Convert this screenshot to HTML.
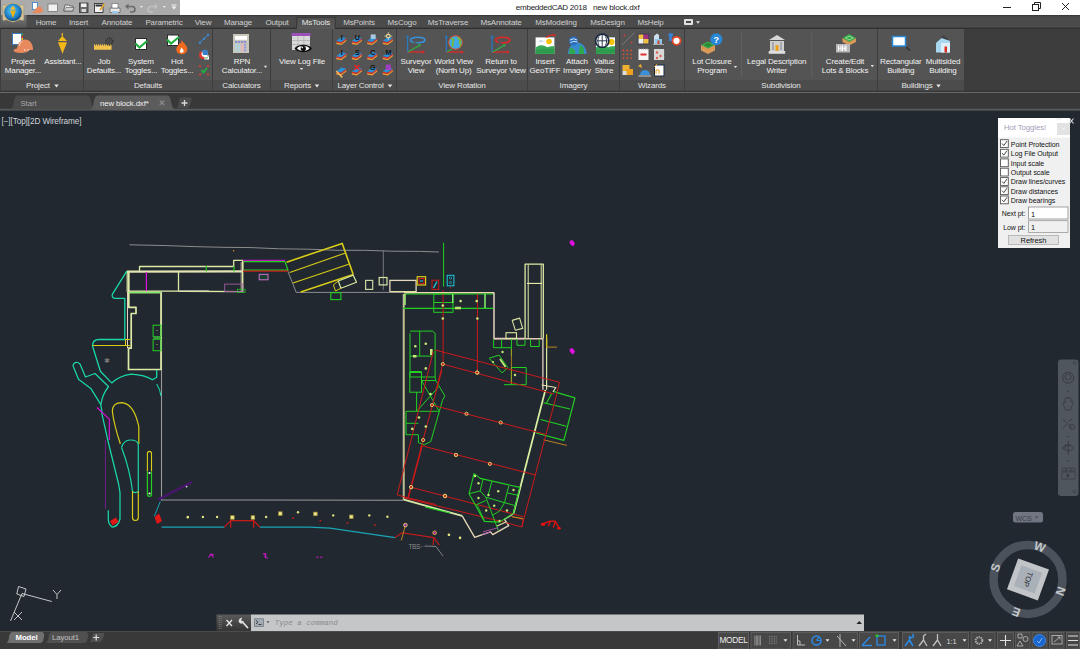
<!DOCTYPE html>
<html><head><meta charset="utf-8"><title>embeddedCAD</title>
<style>
*{margin:0;padding:0}
html,body{width:1080px;height:649px;overflow:hidden;background:#212830;font-family:"Liberation Sans",sans-serif}
svg{display:block;position:absolute;left:0;top:0}

</style></head><body>
<svg width="1080" height="649" viewBox="0 0 1080 649" shape-rendering="auto">
<rect x="0" y="110" width="1080" height="521" fill="#212830"/>
<path d="M129.4 244.8 L166.7 245.6 L196.7 246.7 L224.0 247.3 L251.7 247.6 L279.4 248.8 L308.5 249.2 L337.0 250.3 L364.3 250.3 L392.1 251.2 L420.6 251.4 L438.9 252.0" stroke="#8c8c8c" stroke-width="1" fill="none" stroke-linejoin="round" />
<path d="M383.3 250.5 L383.3 290.1" stroke="#8c8c8c" stroke-width="0.8" fill="none" stroke-linejoin="round" />
<path d="M287.1 269.4 L296.2 292.4 L389.0 292.4" stroke="#8c8c8c" stroke-width="1" fill="none" stroke-linejoin="round" />
<path d="M161.5 292.0 L161.5 499.9 L403.2 500.2 L403.2 294.0" stroke="#9a9a9a" stroke-width="1.1" fill="none" stroke-linejoin="round" />
<path d="M139.5 271.0 L139.5 266.5 L233.7 266.5 L233.7 260.3 L242.7 260.3 L242.7 271.0" stroke="#dfe9a6" stroke-width="1.3" fill="none" stroke-linejoin="round" />
<path d="M126.8 271.6 L243.0 271.4" stroke="#e2e4b4" stroke-width="2.2" fill="none" stroke-linejoin="round" />
<path d="M127.2 271.3 L127.2 292.0" stroke="#dfe9a6" stroke-width="1.2" fill="none" stroke-linejoin="round" />
<path d="M128.8 271.5 L128.8 307.3 L136.0 307.3 L136.0 313.5 L131.2 313.5 L131.2 348.2 L128.5 348.2 L128.5 369.5 L161.0 369.5 L161.0 292.5 L128.8 292.5" stroke="#dfe9a6" stroke-width="1.7" fill="none" stroke-linejoin="round" />
<path d="M127.5 292.0 L127.5 348.0" stroke="#e6d2c0" stroke-width="1" fill="none" stroke-linejoin="round" />
<path d="M129.0 292.5 L161.0 292.5" stroke="#7ee86a" stroke-width="1.6" fill="none" stroke-linejoin="round" />
<path d="M128.0 291.1 L178.5 291.1 L178.5 271.7" stroke="#dfe9a6" stroke-width="1.3" fill="none" stroke-linejoin="round" />
<path d="M178.5 291.3 L243.0 291.6" stroke="#dfe9a6" stroke-width="1.4" fill="none" stroke-linejoin="round" />
<path d="M180.0 290.6 L209.0 290.6" stroke="#a8a8a0" stroke-width="1" fill="none" stroke-linejoin="round" />
<path d="M242.7 260.3 L242.7 292.2" stroke="#dfe9a6" stroke-width="1.4" fill="none" stroke-linejoin="round" />
<path d="M241.2 262.0 L241.2 292.0" stroke="#e6d2c0" stroke-width="0.8" fill="none" stroke-linejoin="round" />
<path d="M146.4 272.0 L146.4 291.0" stroke="#e010e0" stroke-width="1.2" fill="none" stroke-linejoin="round" />
<path d="M206.3 266.0 L206.3 271.5" stroke="#22d022" stroke-width="1.2" fill="none" stroke-linejoin="round" /><path d="M234.0 266.0 L234.0 271.5" stroke="#22d022" stroke-width="1.2" fill="none" stroke-linejoin="round" />
<path d="M242.7 260.3 L285.4 260.3" stroke="#e010e0" stroke-width="1" fill="none" stroke-linejoin="round" />
<path d="M244.0 261.6 L285.0 261.6 L288.0 270.2 L244.0 270.2" stroke="#22d022" stroke-width="1.2" fill="none" stroke-linejoin="round" />
<path d="M243.0 271.1 L288.4 271.1" stroke="#cc1a1a" stroke-width="1.3" fill="none" stroke-linejoin="round" />
<rect x="224.7" y="284.1" width="18.30000000000001" height="7.5" stroke="#a060a0" stroke-width="0.9" fill="none"/>
<rect x="237.3" y="289.2" width="7.799999999999983" height="3.3000000000000114" stroke="#22d022" stroke-width="0.7" fill="none"/>
<rect x="259.2" y="274.3" width="8.800000000000011" height="5.5" stroke="#d070d0" stroke-width="1" fill="#1a4030"/>
<rect x="233" y="250" width="1.2" height="1.5" fill="#d08020"/>
<rect x="153.1" y="325.2" width="7.900000000000006" height="11.5" stroke="#22d022" stroke-width="1" fill="none"/><rect x="153.1" y="339.2" width="7.900000000000006" height="11.5" stroke="#22d022" stroke-width="1" fill="none"/>
<rect x="153.5" y="336.5" width="7" height="2.8" fill="#3a9a3a"/>
<path d="M126.8 271.2L112.3 294.3Q111.5 298.4 115.5 298.4L124.8 298.4L124.8 339.5L99 339.5Q92.5 339.5 92.5 346L100.3 371L102 373L111.7 382.9Q120 375.5 131.5 374.2Q145 375 152.4 379.8L156.7 377.3L156.7 370" stroke="#18d8a8" stroke-width="1.3" fill="none" stroke-linejoin="round" />
<path d="M80 364Q77 361 74 363.5Q72.5 365.5 73.5 367L78.5 379.2L90.8 388.4L100.7 404.4Q102 410 102 414.3L108.7 444L118.6 484L120 492.7L120 519Q118 527 112 527Q108.3 524 108.3 519L108.3 510.3" stroke="#18d8a8" stroke-width="1.25" fill="none" stroke-linejoin="round" />
<path d="M80 364L85.5 377L95 373.5L108.5 386.5Q102 395 101 404.4" stroke="#18d8a8" stroke-width="1.25" fill="none" stroke-linejoin="round" />
<path d="M156.7 384Q160 389 161 395.8" stroke="#18d8a8" stroke-width="1.1" fill="none" stroke-linejoin="round" />
<path d="M92.5 345.5 L130.0 345.5" stroke="#d8cc18" stroke-width="1.1" fill="none" stroke-linejoin="round" /><path d="M125.5 339.5 L125.5 345.5" stroke="#d8cc18" stroke-width="1" fill="none" stroke-linejoin="round" /><path d="M125.0 339.5 L130.0 339.5" stroke="#d8cc18" stroke-width="1" fill="none" stroke-linejoin="round" />
<text x="107" y="363.3" font-size="7" fill="#7a7a7a" text-anchor="middle" font-family="Liberation Sans">✱</text>
<path d="M120.4 444Q114 425 112.4 411.8Q112 402.6 122.2 402.6Q134 404 138.8 426.6L138.8 444" stroke="#d8cc18" stroke-width="1.2" fill="none" stroke-linejoin="round" />
<path d="M121.5 447.3Q124 440 130 440Q138.3 440 138.3 445L138.3 491.2Q135.5 494 132.5 491.2Q130 470 121.5 447.3" stroke="#18d8a8" stroke-width="1.2" fill="none" stroke-linejoin="round" />
<path d="M132.5 491.2L132.5 517.5Q132.5 520.5 135.4 520.5Q138.3 520.5 138.3 517.5L138.3 491.2" stroke="#d8cc18" stroke-width="1.2" fill="none" stroke-linejoin="round" />
<path d="M147.4 471.5L147.4 453.5Q147.4 451.4 149.5 451.4Q151.5 451.4 151.5 453.5L151.5 471.5" stroke="#d8cc18" stroke-width="1.1" fill="none" stroke-linejoin="round" />
<path d="M147.4 471.5L147.4 494.5Q147.4 496.4 149.5 496.4Q151.5 496.4 151.5 494.5L151.5 471.5" stroke="#22d022" stroke-width="1.2" fill="none" stroke-linejoin="round" />
<path d="M97.0 407.5 L109.3 419.2 L109.3 440.0" stroke="#e010e0" stroke-width="1.1" fill="none" stroke-linejoin="round" />
<path d="M105.4 440.0 L105.4 508.8" stroke="#70208a" stroke-width="1" fill="none" stroke-linejoin="round" />
<path d="M110 521L116 517.5L118.5 522L112.5 525.5Z" fill="#e01818"/>
<path d="M154.5 517L159 513.5L162 521L157 524Z" fill="#e01818"/>
<path d="M160.3 501.5 L154.4 516.1" stroke="#1aa4b4" stroke-width="1" fill="none" stroke-linejoin="round" />
<path d="M158.8 499.3 L191.0 482.5 Z" stroke="#4a1470" stroke-width="2.2" fill="none" stroke-linejoin="round" />
<path d="M161.7 527.1 L224.4 527.1" stroke="#1aa4b4" stroke-width="1.3" fill="none" stroke-linejoin="round" /><path d="M259.9 527.1 L309.2 527.1 L330.0 528.2 L395.0 537.6" stroke="#1aa4b4" stroke-width="1.3" fill="none" stroke-linejoin="round" />
<path d="M224.4 527.2 L230.7 520.6 L253.6 520.6 L259.9 527.2" stroke="#cc1a1a" stroke-width="1.2" fill="none" stroke-linejoin="round" /><path d="M230.7 520.6 L230.7 527.8" stroke="#cc1a1a" stroke-width="1.2" fill="none" stroke-linejoin="round" /><path d="M253.6 520.6 L253.6 527.8" stroke="#cc1a1a" stroke-width="1.2" fill="none" stroke-linejoin="round" />
<rect x="230.6" y="515.7" width="3.6" height="3.6" fill="#e8e890" stroke="#a08830" stroke-width="0.7"/>
<rect x="251.1" y="515.7" width="3.6" height="3.6" fill="#e8e890" stroke="#a08830" stroke-width="0.7"/>
<rect x="278.5" y="511.8" width="3.6" height="3.6" fill="#e8e890" stroke="#a08830" stroke-width="0.7"/>
<rect x="313.59999999999997" y="512.1" width="3.6" height="3.6" fill="#e8e890" stroke="#a08830" stroke-width="0.7"/>
<rect x="349.5" y="515.0" width="3.6" height="3.6" fill="#e8e890" stroke="#a08830" stroke-width="0.7"/>
<path d="M208.5 557.5L211 554L213.5 557.5M210 554.5H213L212 556" stroke="#c818c8" stroke-width="1.2" fill="none"/>
<path d="M263 553.5L266 555L264.5 557M265.5 553V557.5L268 558" stroke="#c818c8" stroke-width="1.2" fill="none"/>
<path d="M316.5 557.2 L318.5 557.2" stroke="#c818c8" stroke-width="1.2" fill="none" stroke-linejoin="round" /><path d="M320.2 557.2 L322.2 557.2" stroke="#c818c8" stroke-width="1.2" fill="none" stroke-linejoin="round" />
<path d="M395.0 537.6 L402.0 532.8 L433.9 537.6 L439.4 545.3" stroke="#cc1a1a" stroke-width="1.1" fill="none" stroke-linejoin="round" /><path d="M433.9 537.6 L433.0 545.0" stroke="#cc1a1a" stroke-width="1.1" fill="none" stroke-linejoin="round" />
<path d="M405.4 525.1 L401.3 540.4" stroke="#d08a20" stroke-width="0.9" fill="none" stroke-linejoin="round" />
<circle cx="405.4" cy="525.1" r="1.8" fill="#a020a0" stroke="#e8e070" stroke-width="0.9"/><circle cx="434.6" cy="532.8" r="1.8" fill="#a020a0" stroke="#e0c040" stroke-width="0.9"/>
<text x="408.5" y="549" font-size="6.5" fill="#8a8a8a" font-family="Liberation Sans" letter-spacing="-0.4">TBS···</text>
<path d="M425.0 546.0 L436.0 546.5 L443.0 556.1" stroke="#8c8c8c" stroke-width="0.9" fill="none" stroke-linejoin="round" />
<path d="M286.5 262.2 L342.2 243.4 L353.2 274.5" stroke="#d8cc18" stroke-width="1.6" fill="none" stroke-linejoin="round" />
<path d="M300.7 292.0 L353.2 274.5" stroke="#d8cc18" stroke-width="1.4" fill="none" stroke-linejoin="round" />
<path d="M289.7 272.6 L344.8 253.2" stroke="#d8cc18" stroke-width="1.1" fill="none" stroke-linejoin="round" /><path d="M293.0 283.0 L348.7 264.2" stroke="#d8cc18" stroke-width="1.1" fill="none" stroke-linejoin="round" />
<path d="M338.3 281.0 L353.2 275.2 L356.5 282.3 L340.9 288.2 Z" stroke="#d8e8a0" stroke-width="1.2" fill="none" stroke-linejoin="round" />
<path d="M338.3 281.0 L333.4 284.9 L335.5 291.0 L340.9 288.2" stroke="#d8cc18" stroke-width="1" fill="none" stroke-linejoin="round" />
<rect x="365.6" y="280.4" width="7.099999999999966" height="9.0" stroke="#c8d8a0" stroke-width="1.2" fill="none"/><rect x="379.2" y="277.5" width="7.800000000000011" height="7.399999999999977" stroke="#d8e8a8" stroke-width="1.2" fill="none"/>
<rect x="389.9" y="280.4" width="26.200000000000045" height="11.600000000000023" stroke="#e8d8c0" stroke-width="1.3" fill="none"/>
<path d="M390.5 291.5 L416.0 291.5" stroke="#dfe9a6" stroke-width="0.9" fill="none" stroke-linejoin="round" />
<rect x="330.8" y="292.7" width="10.099999999999966" height="6.900000000000034" stroke="#22d022" stroke-width="1.1" fill="none"/>
<rect x="417.2" y="276.7" width="8.400000000000034" height="8.300000000000011" stroke="#d8cc18" stroke-width="1.2" fill="none"/><rect x="419" y="278.5" width="5" height="5.0" stroke="#cc1a1a" stroke-width="1" fill="none"/><path d="M420.0 281.0 L423.0 281.0" stroke="#20d0e0" stroke-width="1" fill="none" stroke-linejoin="round" />
<rect x="432" y="280.2" width="6.699999999999989" height="9.199999999999989" stroke="#cc1a1a" stroke-width="1" fill="none"/><path d="M433.5 288.0 L437.0 281.5" stroke="#20d0e0" stroke-width="1.3" fill="none" stroke-linejoin="round" />
<rect x="447.2" y="275.3" width="6.699999999999989" height="10.5" stroke="#20c8e0" stroke-width="1" fill="none"/><circle cx="450.5" cy="278" r="1.2" fill="none" stroke="#20c8e0" stroke-width="0.6"/><circle cx="450.5" cy="282.6" r="1.2" fill="none" stroke="#20c8e0" stroke-width="0.6"/><circle cx="450.5" cy="287.8" r="0.7" fill="#cc1a1a"/>
<path d="M443.6 242.8 L443.6 286.7" stroke="#22d022" stroke-width="1" fill="none" stroke-linejoin="round" />
<path d="M569.5 241L572.5 240L575 243.5L573 246.5L570 244Z" fill="#e010e0"/><path d="M569.5 349L572.5 348L575 351.5L573 354.5L570 352Z" fill="#e010e0"/>
<path d="M403.9 294.0 L403.9 499.7" stroke="#c8c890" stroke-width="1.6" fill="none" stroke-linejoin="round" />
<path d="M403.9 292.8 L494.4 292.8" stroke="#f0d8b0" stroke-width="1.6" fill="none" stroke-linejoin="round" />
<path d="M405.0 294.0 L493.5 294.0" stroke="#22d022" stroke-width="1" fill="none" stroke-linejoin="round" />
<path d="M494.0 293.0 L494.0 338.5 L524.4 338.5" stroke="#e6d2c0" stroke-width="1.5" fill="none" stroke-linejoin="round" />
<path d="M525.1 338.5 L525.1 264.2 L543.3 264.2 L543.3 338.5" stroke="#dfe9a6" stroke-width="1.3" fill="none" stroke-linejoin="round" />
<path d="M528.2 338.5 L528.2 264.5" stroke="#dfe9a6" stroke-width="1" fill="none" stroke-linejoin="round" /><path d="M541.2 338.5 L541.2 264.5" stroke="#dfe9a6" stroke-width="1" fill="none" stroke-linejoin="round" />
<path d="M527.0 283.4 L542.0 283.4" stroke="#f0f0b0" stroke-width="1.1" fill="none" stroke-linejoin="round" />
<path d="M494.0 338.8 L543.0 338.8" stroke="#e8c8b8" stroke-width="1.5" fill="none" stroke-linejoin="round" />
<path d="M542.9 338.5 L542.9 389.7" stroke="#e6d2c0" stroke-width="1.3" fill="none" stroke-linejoin="round" /><path d="M546.6 338.5 L546.6 389.7" stroke="#dfe9a6" stroke-width="1.2" fill="none" stroke-linejoin="round" />
<path d="M546.6 334.2 L546.6 347.1" stroke="#d8cc18" stroke-width="1.2" fill="none" stroke-linejoin="round" /><path d="M546.0 347.1 L557.0 347.1" stroke="#c89020" stroke-width="0.9" fill="none" stroke-linejoin="round" />
<path d="M512.2 320.4 L519.6 318.1 L522.7 328.4 L515.3 330.2 Z" stroke="#d8e0a0" stroke-width="1.1" fill="none" stroke-linejoin="round" />
<rect x="506" y="332.7" width="10.5" height="5.800000000000011" stroke="#e0e8a0" stroke-width="1.1" fill="none"/>
<path d="M545.4 389.9 L513.5 513.8" stroke="#d8f0a0" stroke-width="1.8" fill="none" stroke-linejoin="round" />
<path d="M513.5 513.8 L504.5 519.3 L508.7 525.6 L492.7 534.6 L490.6 531.8 L482.3 534.6 L474.7 537.4 L462.2 515.9" stroke="#e8d8b8" stroke-width="1.3" fill="none" stroke-linejoin="round" />
<path d="M482.3 534.6 L490.6 531.8" stroke="#c060c0" stroke-width="1" fill="none" stroke-linejoin="round" />
<path d="M403.9 499.7 L462.2 515.9" stroke="#d8e8a8" stroke-width="1.8" fill="none" stroke-linejoin="round" />
<path d="M425.0 507.0 L450.0 513.0" stroke="#22d022" stroke-width="1.2" fill="none" stroke-linejoin="round" />
<path d="M541.7 385.0 L555.8 387.5 L553.0 392.0" stroke="#e8e8b0" stroke-width="1.2" fill="none" stroke-linejoin="round" />
<path d="M403.0 308.4 L493.6 308.4" stroke="#22d022" stroke-width="1.1" fill="none" stroke-linejoin="round" />
<rect x="433.8" y="294" width="19.19999999999999" height="18.30000000000001" stroke="#22d022" stroke-width="1" fill="none"/><path d="M433.8 302.5 L453.0 302.5" stroke="#22d022" stroke-width="1" fill="none" stroke-linejoin="round" />
<path d="M485.0 294.0 L485.0 308.0" stroke="#7ee86a" stroke-width="1.6" fill="none" stroke-linejoin="round" /><path d="M452.7 294.0 L452.7 303.0" stroke="#7ee86a" stroke-width="1.4" fill="none" stroke-linejoin="round" />
<rect x="455" y="306.7" width="6" height="2.6" fill="#b8e070"/>
<path d="M405.0 294.0 L405.0 305.0" stroke="#9ee87a" stroke-width="1.6" fill="none" stroke-linejoin="round" />
<path d="M410.0 333.3 L410.0 377.0 L435.1 377.0 L435.1 333.3 L432.6 331.1 L410.0 331.1" stroke="#22d022" stroke-width="1" fill="none" stroke-linejoin="round" />
<path d="M419.7 331.0 L419.7 356.1" stroke="#22d022" stroke-width="1" fill="none" stroke-linejoin="round" /><path d="M410.0 356.1 L432.0 356.1" stroke="#22d022" stroke-width="1" fill="none" stroke-linejoin="round" /><path d="M410.0 371.5 L421.5 371.5" stroke="#22d022" stroke-width="1" fill="none" stroke-linejoin="round" />
<rect x="409.8" y="372.5" width="11.699999999999989" height="19.69999999999999" stroke="#22d022" stroke-width="1" fill="none"/>
<path d="M421.5 380.5 L435.7 380.5 L444.9 395.9 L442.5 400.2 L430.8 441.5 L424.6 444.6 L418.4 442.7 L418.4 434.7 L406.0 434.7 L406.0 411.3 L438.8 411.3" stroke="#22d022" stroke-width="1" fill="none" stroke-linejoin="round" />
<path d="M421.5 380.5 L438.8 410.7" stroke="#22d022" stroke-width="1" fill="none" stroke-linejoin="round" /><path d="M438.2 387.3 L417.2 410.7" stroke="#22d022" stroke-width="1" fill="none" stroke-linejoin="round" /><path d="M416.6 392.0 L416.6 411.0" stroke="#22d022" stroke-width="1" fill="none" stroke-linejoin="round" /><path d="M406.0 423.3 L418.4 423.3" stroke="#22d022" stroke-width="1" fill="none" stroke-linejoin="round" />
<path d="M435.1 377.0 L435.7 380.5" stroke="#22d022" stroke-width="1" fill="none" stroke-linejoin="round" />
<rect x="413" y="355" width="3.5" height="2.5" fill="#c8e878"/><rect x="430" y="349" width="2.6" height="6" fill="#c8e878"/>
<path d="M493.6 339.0 L493.6 347.7 L511.4 347.7" stroke="#22d022" stroke-width="1" fill="none" stroke-linejoin="round" /><path d="M511.4 339.0 L511.4 356.4" stroke="#22d022" stroke-width="1" fill="none" stroke-linejoin="round" />
<path d="M501.6 339.0 L501.6 347.7" stroke="#22d022" stroke-width="1" fill="none" stroke-linejoin="round" />
<path d="M517.0 339.0 L517.0 345.3 L525.0 345.3 L525.0 339.0" stroke="#22d022" stroke-width="1" fill="none" stroke-linejoin="round" /><path d="M530.6 339.0 L530.6 346.5 L539.2 346.5 L539.2 339.0" stroke="#22d022" stroke-width="1" fill="none" stroke-linejoin="round" />
<path d="M489.2 358.2 L499.1 355.1 L507.7 367.5 L502.2 373.0 Z" stroke="#22d022" stroke-width="1" fill="none" stroke-linejoin="round" />
<path d="M500.0 359.0 L505.5 367.0" stroke="#c8e878" stroke-width="1.8" fill="none" stroke-linejoin="round" />
<path d="M504.0 384.7 L526.2 384.7 L526.2 367.5 L511.4 367.5 L511.4 384.7" stroke="#22d022" stroke-width="1" fill="none" stroke-linejoin="round" />
<path d="M511.4 349.0 L511.4 384.0" stroke="#c89020" stroke-width="0.8" fill="none" stroke-linejoin="round" />
<path d="M554.0 391.7 L574.9 397.9 L563.8 440.4 L536.1 433.0" stroke="#22d022" stroke-width="1.2" fill="none" stroke-linejoin="round" />
<path d="M543.5 402.8 L570.0 409.0" stroke="#22d022" stroke-width="1.1" fill="none" stroke-linejoin="round" /><path d="M540.4 419.5 L566.3 426.2" stroke="#22d022" stroke-width="1.1" fill="none" stroke-linejoin="round" />
<path d="M552.0 393.0 L546.0 404.0" stroke="#22d022" stroke-width="1.1" fill="none" stroke-linejoin="round" />
<path d="M543.5 439.8 L566.9 445.4" stroke="#c88a20" stroke-width="0.9" fill="none" stroke-linejoin="round" />
<path d="M443.1 294.0 L443.1 364.1" stroke="#cc1a1a" stroke-width="1.0" fill="none" stroke-linejoin="round" /><path d="M477.4 294.0 L477.4 372.7" stroke="#cc1a1a" stroke-width="1.0" fill="none" stroke-linejoin="round" />
<path d="M435.1 350.0 L559.5 382.3 L555.2 400.0 L539.2 460.0 L521.8 527.0 L506.6 522.8" stroke="#cc1a1a" stroke-width="1.0" fill="none" stroke-linejoin="round" />
<path d="M442.8 364.1 L554.0 394.0" stroke="#cc1a1a" stroke-width="1.0" fill="none" stroke-linejoin="round" />
<path d="M441.9 370.0 L420.3 450.0" stroke="#cc1a1a" stroke-width="1.0" fill="none" stroke-linejoin="round" />
<path d="M433.2 351.8 L408.6 450.0 L397.2 494.8 L404.7 497.0 L436.0 504.5" stroke="#cc1a1a" stroke-width="1.0" fill="none" stroke-linejoin="round" />
<path d="M432.0 405.1 L545.4 434.3" stroke="#cc1a1a" stroke-width="1.0" fill="none" stroke-linejoin="round" />
<path d="M422.0 445.8 L535.7 475.0" stroke="#cc1a1a" stroke-width="1.0" fill="none" stroke-linejoin="round" />
<path d="M422.0 445.8 L407.9 498.6" stroke="#cc1a1a" stroke-width="1.6" fill="none" stroke-linejoin="round" />
<path d="M411.2 487.3 L523.2 516.6" stroke="#cc1a1a" stroke-width="1.0" fill="none" stroke-linejoin="round" />
<path d="M404.0 497.8 L506.6 522.8" stroke="#cc1a1a" stroke-width="1.0" fill="none" stroke-linejoin="round" />
<path d="M442.8 364.1 L436.0 390.0" stroke="#cc1a1a" stroke-width="1.0" fill="none" stroke-linejoin="round" />
<path d="M511.4 516.6 L523.2 519.3 L521.8 527.0" stroke="#cc1a1a" stroke-width="1" fill="none" stroke-linejoin="round" />
<path d="M541.0 524.4 L550.3 521.2 L555.4 521.2 L559.0 528.1" stroke="#ee1010" stroke-width="1.3" fill="none" stroke-linejoin="round" /><path d="M550.3 521.2 L548.4 526.3" stroke="#ee1010" stroke-width="1.2" fill="none" stroke-linejoin="round" /><path d="M555.4 521.2 L553.3 527.7" stroke="#ee1010" stroke-width="1.2" fill="none" stroke-linejoin="round" /><ellipse cx="543" cy="524.4" rx="2.2" ry="1.3" fill="#ee1010"/><ellipse cx="559" cy="528.3" rx="1.8" ry="1.3" fill="#ee1010"/>
<path d="M512.1 516.6 L523.2 518.7" stroke="#c8a020" stroke-width="0.9" fill="none" stroke-linejoin="round" />
<circle cx="442.8" cy="364.1" r="1.6" fill="#cc1a1a" stroke="#d8d870" stroke-width="0.9"/>
<circle cx="477.4" cy="372.7" r="1.6" fill="#cc1a1a" stroke="#d8d870" stroke-width="0.9"/>
<circle cx="432" cy="405.1" r="1.6" fill="#cc1a1a" stroke="#d8d870" stroke-width="0.9"/>
<circle cx="466.5" cy="413.8" r="1.6" fill="#cc1a1a" stroke="#d8d870" stroke-width="0.9"/>
<circle cx="477" cy="372.5" r="1.6" fill="#cc1a1a" stroke="#d8d870" stroke-width="0.9"/>
<circle cx="423.1" cy="440" r="1.6" fill="#cc1a1a" stroke="#d8d870" stroke-width="0.9"/>
<circle cx="455.9" cy="455" r="1.6" fill="#cc1a1a" stroke="#d8d870" stroke-width="0.9"/>
<circle cx="411.2" cy="487.3" r="1.6" fill="#cc1a1a" stroke="#d8d870" stroke-width="0.9"/>
<circle cx="445.1" cy="496.2" r="1.6" fill="#cc1a1a" stroke="#d8d870" stroke-width="0.9"/>
<circle cx="456" cy="454.9" r="1.6" fill="#cc1a1a" stroke="#d8d870" stroke-width="0.9"/>
<circle cx="489.9" cy="463.9" r="1.6" fill="#cc1a1a" stroke="#d8d870" stroke-width="0.9"/>
<circle cx="444.9" cy="495.8" r="1.6" fill="#cc1a1a" stroke="#d8d870" stroke-width="0.9"/>
<circle cx="500.7" cy="422.5" r="1.6" fill="#cc1a1a" stroke="#d8d870" stroke-width="0.9"/>
<circle cx="411" cy="487" r="1.6" fill="#cc1a1a" stroke="#d8d870" stroke-width="0.9"/>
<circle cx="445" cy="496" r="1.6" fill="#cc1a1a" stroke="#d8d870" stroke-width="0.9"/>
<path d="M474.0 473.6 L480.2 478.4 L519.8 487.4 L513.5 513.1 L499.6 522.1 L484.4 521.4 L469.1 493.7 Z" stroke="#22d022" stroke-width="1.1" fill="none" stroke-linejoin="round" />
<path d="M469.1 493.7 L480.2 490.9 L483.0 479.1" stroke="#22d022" stroke-width="1" fill="none" stroke-linejoin="round" /><path d="M480.2 490.9 L485.8 497.2 L504.5 502.7 L508.7 486.1" stroke="#22d022" stroke-width="1" fill="none" stroke-linejoin="round" />
<path d="M492.0 481.2 L487.9 495.8" stroke="#22d022" stroke-width="1" fill="none" stroke-linejoin="round" /><path d="M507.3 493.0 L517.0 495.1" stroke="#22d022" stroke-width="1" fill="none" stroke-linejoin="round" /><path d="M504.5 502.7 L514.9 505.5" stroke="#22d022" stroke-width="1" fill="none" stroke-linejoin="round" />
<path d="M485.8 497.2 L498.3 530.4" stroke="#22d022" stroke-width="1" fill="none" stroke-linejoin="round" /><path d="M476.1 504.8 L485.8 500.6" stroke="#22d022" stroke-width="1" fill="none" stroke-linejoin="round" /><path d="M477.4 505.5 L484.4 520.7" stroke="#22d022" stroke-width="1" fill="none" stroke-linejoin="round" /><path d="M492.7 515.2 L499.6 511.0 L504.5 502.7" stroke="#22d022" stroke-width="1" fill="none" stroke-linejoin="round" />
<path d="M483.0 531.8 L498.3 527.7" stroke="#b050b0" stroke-width="0.9" fill="none" stroke-linejoin="round" />
<path d="M497.0 526.0 L506.0 522.0" stroke="#d8e8a0" stroke-width="1.2" fill="none" stroke-linejoin="round" />
<circle cx="157" cy="330.5" r="0.6" fill="#b0d060"/><circle cx="157" cy="344.5" r="0.6" fill="#b0d060"/>
<circle cx="149.5" cy="473" r="1.1" fill="#e8f0e0"/><circle cx="149.5" cy="493.5" r="1.1" fill="#e8f0e0"/>
<circle cx="186.6" cy="486.6" r="0.9" fill="#ddd"/>
<circle cx="187.9" cy="517" r="1.2" fill="#e0e080"/>
<circle cx="202.9" cy="517" r="1.2" fill="#e0e080"/>
<circle cx="217.1" cy="517" r="1.2" fill="#e0e080"/>
<circle cx="266.1" cy="517" r="1.2" fill="#e0e080"/>
<circle cx="298" cy="512.2" r="1.2" fill="#e0e080"/>
<circle cx="333.2" cy="515.4" r="1.2" fill="#e0e080"/>
<circle cx="369.3" cy="515.4" r="1.2" fill="#e0e080"/>
<circle cx="387.4" cy="516.8" r="1.2" fill="#e0e080"/>
<circle cx="448.9" cy="534.9" r="1.2" fill="#e0e080"/>
<circle cx="460" cy="538" r="1.2" fill="#e0e080"/>
<circle cx="449" cy="534.6" r="1.2" fill="#e0e080"/>
<circle cx="460.1" cy="537.7" r="1.2" fill="#e0e080"/>
<circle cx="187.8" cy="517.3" r="1.2" fill="#e0e080"/>
<circle cx="293.2" cy="518.2" r="0.9" fill="#e01818"/>
<circle cx="320.3" cy="520.6" r="0.9" fill="#e01818"/>
<circle cx="347.5" cy="522.8" r="0.9" fill="#e01818"/>
<circle cx="374.9" cy="525.1" r="0.9" fill="#e01818"/>
<circle cx="443" cy="291" r="0.8" fill="#cc1a1a"/>
<circle cx="425.8" cy="343.8" r="1.3" fill="#c8e878"/>
<circle cx="415.3" cy="346.2" r="1.3" fill="#c8e878"/>
<circle cx="425.8" cy="368.4" r="1.3" fill="#c8e878"/>
<circle cx="419" cy="417.5" r="1.3" fill="#c8e878"/>
<circle cx="412.3" cy="428.9" r="1.3" fill="#c8e878"/>
<circle cx="425.8" cy="426.5" r="1.3" fill="#c8e878"/>
<circle cx="460.6" cy="301.1" r="1.3" fill="#c8e878"/>
<circle cx="476.7" cy="301.1" r="1.3" fill="#c8e878"/>
<circle cx="442.8" cy="305.6" r="1.3" fill="#c8e878"/>
<circle cx="430.5" cy="394" r="1.3" fill="#c8e878"/>
<circle cx="442.8" cy="318.5" r="1.3" fill="#c8e878"/>
<circle cx="477.4" cy="318.5" r="1.3" fill="#c8e878"/>
<circle cx="502.5" cy="352" r="1.2" fill="#c8e878"/><circle cx="515" cy="375" r="1.2" fill="#c8e878"/><circle cx="493" cy="362" r="1.1" fill="#c8e878"/>
<circle cx="478.5" cy="483.3" r="1.2" fill="#c8e878"/>
<circle cx="498.2" cy="491.3" r="1.2" fill="#c8e878"/>
<circle cx="478.5" cy="498" r="1.2" fill="#c8e878"/>
<circle cx="488.5" cy="495" r="1.2" fill="#c8e878"/>
<circle cx="494.2" cy="505.7" r="1.2" fill="#c8e878"/>
<circle cx="486.2" cy="510.5" r="1.2" fill="#c8e878"/>
<circle cx="507" cy="510.5" r="1.2" fill="#c8e878"/>
<circle cx="513.5" cy="490" r="1.2" fill="#c8e878"/>
<circle cx="499.6" cy="521" r="1.2" fill="#c8e878"/>
<circle cx="475" cy="476" r="1.2" fill="#c8e878"/>
<rect x="0" y="0" width="1080" height="15" fill="#ffffff" />
<rect x="0" y="0" width="180" height="15" fill="#ababab" />
<text x="515.8" y="10.3" font-size="8.1" fill="#1a1a1a" text-anchor="start" letter-spacing="-0.3" font-weight="normal" font-style="normal" font-family="Liberation Sans" >embeddedCAD 2018</text>
<text x="593" y="10.3" font-size="8.1" fill="#1a1a1a" text-anchor="start" letter-spacing="-0.2" font-weight="normal" font-style="normal" font-family="Liberation Sans" >new block.dxf</text>
<path d="M1003 7.5H1011" stroke="#222" stroke-width="1"/>
<rect x="1032.5" y="4.5" width="6" height="6" fill="none" stroke="#222"/><path d="M1034.5 4.5V2.5H1040.5V8.5H1038.5" fill="none" stroke="#222"/>
<path d="M1062 3L1069 10M1069 3L1062 10" stroke="#222" stroke-width="1"/>
<rect x="0" y="15" width="1080" height="13" fill="#4b4b4b" />
<rect x="0" y="27.6" width="296.5" height="1.2" fill="#333333" /><rect x="335.5" y="27.6" width="745" height="1.2" fill="#333333" />
<rect x="0" y="15" width="1080" height="1.2" fill="#3a3a3a" />
<defs><linearGradient id="acttab" x1="0" y1="0" x2="0" y2="1"><stop offset="0" stop-color="#505050"/><stop offset="1" stop-color="#5a5a5a"/></linearGradient></defs>
<rect x="296.7" y="17" width="38.5" height="12.5" fill="url(#acttab)" />
<path d="M296.7 29.5V17.3H335.2V29.5" fill="none" stroke="#333" stroke-width="0.9"/>
<text x="46" y="24.7" font-size="8" fill="#d0d0d0" text-anchor="middle" letter-spacing="-0.15" font-weight="normal" font-style="normal" font-family="Liberation Sans" >Home</text>
<text x="78.5" y="24.7" font-size="8" fill="#d0d0d0" text-anchor="middle" letter-spacing="-0.15" font-weight="normal" font-style="normal" font-family="Liberation Sans" >Insert</text>
<text x="117" y="24.7" font-size="8" fill="#d0d0d0" text-anchor="middle" letter-spacing="-0.15" font-weight="normal" font-style="normal" font-family="Liberation Sans" >Annotate</text>
<text x="164" y="24.7" font-size="8" fill="#d0d0d0" text-anchor="middle" letter-spacing="-0.15" font-weight="normal" font-style="normal" font-family="Liberation Sans" >Parametric</text>
<text x="203" y="24.7" font-size="8" fill="#d0d0d0" text-anchor="middle" letter-spacing="-0.15" font-weight="normal" font-style="normal" font-family="Liberation Sans" >View</text>
<text x="238" y="24.7" font-size="8" fill="#d0d0d0" text-anchor="middle" letter-spacing="-0.15" font-weight="normal" font-style="normal" font-family="Liberation Sans" >Manage</text>
<text x="277" y="24.7" font-size="8" fill="#d0d0d0" text-anchor="middle" letter-spacing="-0.15" font-weight="normal" font-style="normal" font-family="Liberation Sans" >Output</text>
<text x="316" y="24.7" font-size="8" fill="#e6e6e6" text-anchor="middle" letter-spacing="-0.15" font-weight="normal" font-style="normal" font-family="Liberation Sans" >MsTools</text>
<text x="359" y="24.7" font-size="8" fill="#d0d0d0" text-anchor="middle" letter-spacing="-0.15" font-weight="normal" font-style="normal" font-family="Liberation Sans" >MsPoints</text>
<text x="402" y="24.7" font-size="8" fill="#d0d0d0" text-anchor="middle" letter-spacing="-0.15" font-weight="normal" font-style="normal" font-family="Liberation Sans" >MsCogo</text>
<text x="448" y="24.7" font-size="8" fill="#d0d0d0" text-anchor="middle" letter-spacing="-0.15" font-weight="normal" font-style="normal" font-family="Liberation Sans" >MsTraverse</text>
<text x="501" y="24.7" font-size="8" fill="#d0d0d0" text-anchor="middle" letter-spacing="-0.15" font-weight="normal" font-style="normal" font-family="Liberation Sans" >MsAnnotate</text>
<text x="556" y="24.7" font-size="8" fill="#d0d0d0" text-anchor="middle" letter-spacing="-0.15" font-weight="normal" font-style="normal" font-family="Liberation Sans" >MsModeling</text>
<text x="607.5" y="24.7" font-size="8" fill="#d0d0d0" text-anchor="middle" letter-spacing="-0.15" font-weight="normal" font-style="normal" font-family="Liberation Sans" >MsDesign</text>
<text x="650.5" y="24.7" font-size="8" fill="#d0d0d0" text-anchor="middle" letter-spacing="-0.15" font-weight="normal" font-style="normal" font-family="Liberation Sans" >MsHelp</text>
<rect x="684" y="19" width="9" height="6" rx="1" fill="#e0e0e0"/><rect x="686" y="21" width="5" height="2" fill="#4b4b4b"/>
<path d="M696.0 21.25L700.0 21.25L698 23.75Z" fill="#e0e0e0"/>
<rect x="0" y="29" width="1080" height="63" fill="#3d3d3d" />
<rect x="1" y="29" width="82" height="51" fill="#545454" />
<rect x="1" y="80" width="82" height="11.5" fill="#4c4c4c" />
<text x="38.0" y="88.3" font-size="8" fill="#e4e4e4" text-anchor="middle" letter-spacing="-0.15" font-weight="normal" font-style="normal" font-family="Liberation Sans" >Project</text>
<rect x="84" y="29" width="128" height="51" fill="#545454" />
<rect x="84" y="80" width="128" height="11.5" fill="#4c4c4c" />
<text x="148.0" y="88.3" font-size="8" fill="#e4e4e4" text-anchor="middle" letter-spacing="-0.15" font-weight="normal" font-style="normal" font-family="Liberation Sans" >Defaults</text>
<rect x="213" y="29" width="57" height="51" fill="#545454" />
<rect x="213" y="80" width="57" height="11.5" fill="#4c4c4c" />
<text x="241.5" y="88.3" font-size="8" fill="#e4e4e4" text-anchor="middle" letter-spacing="-0.15" font-weight="normal" font-style="normal" font-family="Liberation Sans" >Calculators</text>
<rect x="271" y="29" width="61" height="51" fill="#545454" />
<rect x="271" y="80" width="61" height="11.5" fill="#4c4c4c" />
<text x="297.5" y="88.3" font-size="8" fill="#e4e4e4" text-anchor="middle" letter-spacing="-0.15" font-weight="normal" font-style="normal" font-family="Liberation Sans" >Reports</text>
<rect x="333" y="29" width="63" height="51" fill="#545454" />
<rect x="333" y="80" width="63" height="11.5" fill="#4c4c4c" />
<text x="360.5" y="88.3" font-size="8" fill="#e4e4e4" text-anchor="middle" letter-spacing="-0.15" font-weight="normal" font-style="normal" font-family="Liberation Sans" >Layer Control</text>
<rect x="397" y="29" width="130" height="51" fill="#545454" />
<rect x="397" y="80" width="130" height="11.5" fill="#4c4c4c" />
<text x="462.0" y="88.3" font-size="8" fill="#e4e4e4" text-anchor="middle" letter-spacing="-0.15" font-weight="normal" font-style="normal" font-family="Liberation Sans" >View Rotation</text>
<rect x="528" y="29" width="91" height="51" fill="#545454" />
<rect x="528" y="80" width="91" height="11.5" fill="#4c4c4c" />
<text x="573.5" y="88.3" font-size="8" fill="#e4e4e4" text-anchor="middle" letter-spacing="-0.15" font-weight="normal" font-style="normal" font-family="Liberation Sans" >Imagery</text>
<rect x="620" y="29" width="64" height="51" fill="#545454" />
<rect x="620" y="80" width="64" height="11.5" fill="#4c4c4c" />
<text x="652.0" y="88.3" font-size="8" fill="#e4e4e4" text-anchor="middle" letter-spacing="-0.15" font-weight="normal" font-style="normal" font-family="Liberation Sans" >Wizards</text>
<rect x="685" y="29" width="192" height="51" fill="#545454" />
<rect x="685" y="80" width="192" height="11.5" fill="#4c4c4c" />
<text x="781.0" y="88.3" font-size="8" fill="#e4e4e4" text-anchor="middle" letter-spacing="-0.15" font-weight="normal" font-style="normal" font-family="Liberation Sans" >Subdivision</text>
<rect x="878" y="29" width="86" height="51" fill="#545454" />
<rect x="878" y="80" width="86" height="11.5" fill="#4c4c4c" />
<text x="917.0" y="88.3" font-size="8" fill="#e4e4e4" text-anchor="middle" letter-spacing="-0.15" font-weight="normal" font-style="normal" font-family="Liberation Sans" >Buildings</text>
<rect x="0" y="90.8" width="1080" height="1.1" fill="#303030" />
<rect x="0" y="91.9" width="1080" height="1.4" fill="#686868" />
<rect x="0" y="93.3" width="1080" height="15.3" fill="#383838" />
<rect x="0" y="108.6" width="1080" height="2" fill="#5a5a5a" />
<rect x="12.5" y="33.5" width="9" height="11" fill="#ffffff" stroke="#3a7ac0" stroke-width="1"/>
<rect x="21.5" y="33.5" width="1.5" height="2" fill="#2db050" /><rect x="21.5" y="35.5" width="1.5" height="2.5" fill="#e03030" /><rect x="21.5" y="38" width="1.5" height="2" fill="#f0c020" />
<path d="M17 50C17 43 21 39.5 25 39.5C30 39.5 33 44 33 50Z" fill="#e88a5e"/>
<ellipse cx="21" cy="50.5" rx="7.5" ry="2.5" fill="#e88a5e"/>
<path d="M19.5 46C19.5 43.5 21 41.5 22.5 41" stroke="#fbd7c3" stroke-width="1" fill="none"/>
<rect x="24" y="49.5" width="1.5" height="1" fill="#fff" /><rect x="27.5" y="49.5" width="1.5" height="1" fill="#fff" />
<text x="23" y="63.5" font-size="8" fill="#f2f2f2" text-anchor="middle" letter-spacing="-0.15" font-weight="normal" font-style="normal" font-family="Liberation Sans" >Project</text>
<text x="23" y="73.0" font-size="8" fill="#f2f2f2" text-anchor="middle" letter-spacing="-0.15" font-weight="normal" font-style="normal" font-family="Liberation Sans" >Manager...</text>
<path d="M62.3 33V36.5" stroke="#f2b81a" stroke-width="1.2"/>
<path d="M58 41L62.3 36L67 41Z" fill="#f2b81a"/>
<path d="M58 42.2L67 42.2L62.5 53.8Z" fill="#f2b81a"/>
<text x="63" y="63.5" font-size="8" fill="#f2f2f2" text-anchor="middle" letter-spacing="-0.15" font-weight="normal" font-style="normal" font-family="Liberation Sans" >Assistant...</text>
<path d="M94 49.7V44.3H95V45.5H96V44.3H97V45.5H98V44.3H99V45.5H100V44.3H101V45.5H102V44.3H103V45.5H104V44.3H105V45.5H106V44.3H107V45.5H108V44.3H109V45.5H110V44.3H111V45.5H112V44.3H111.5V49.7Z" fill="#f2c24e"/>
<circle cx="109.5" cy="41.5" r="3.2" fill="none" stroke="#333" stroke-width="2" stroke-dasharray="1.2 0.8"/><circle cx="109.5" cy="41.5" r="1.5" fill="#444"/>
<text x="104" y="63.5" font-size="8" fill="#f2f2f2" text-anchor="middle" letter-spacing="-0.15" font-weight="normal" font-style="normal" font-family="Liberation Sans" >Job</text>
<text x="104" y="73.0" font-size="8" fill="#f2f2f2" text-anchor="middle" letter-spacing="-0.15" font-weight="normal" font-style="normal" font-family="Liberation Sans" >Defaults...</text>
<rect x="135.5" y="38.5" width="11" height="11" fill="#ffffff" stroke="#2a2a2a" stroke-width="1"/>
<path d="M135.5 43.5L139.5 47.5L147 41" stroke="#20b040" stroke-width="2.2" fill="none"/>
<text x="141" y="63.5" font-size="8" fill="#f2f2f2" text-anchor="middle" letter-spacing="-0.15" font-weight="normal" font-style="normal" font-family="Liberation Sans" >System</text>
<text x="141" y="73.0" font-size="8" fill="#f2f2f2" text-anchor="middle" letter-spacing="-0.15" font-weight="normal" font-style="normal" font-family="Liberation Sans" >Toggles...</text>
<rect x="167.5" y="35" width="11" height="10.5" fill="#ffffff" stroke="#2a2a2a" stroke-width="1"/>
<path d="M167 39.5L171 43.5L179 37" stroke="#20b040" stroke-width="2.2" fill="none"/>
<path d="M181.5 40C183 43 187.5 45 187.3 49.5C187 53 184 54.2 181.5 54.2C178.5 54.2 176 52 176.3 49C176.6 46 179 45 179.5 43C181 44.5 181.5 42 181.5 40Z" fill="#f06a20"/>
<path d="M181.5 47.5C183 49 184 50.5 183.5 52C183 53 180.5 53 180 52C179.5 50.5 180.8 49.5 181.5 47.5Z" fill="#fff"/>
<text x="177" y="63.5" font-size="8" fill="#f2f2f2" text-anchor="middle" letter-spacing="-0.15" font-weight="normal" font-style="normal" font-family="Liberation Sans" >Hot</text>
<text x="177" y="73.0" font-size="8" fill="#f2f2f2" text-anchor="middle" letter-spacing="-0.15" font-weight="normal" font-style="normal" font-family="Liberation Sans" >Toggles...</text>
<path d="M199.5 43L208.5 34.5" stroke="#3a8ad0" stroke-width="1"/><circle cx="200" cy="42.7" r="1.2" fill="#3a8ad0"/><circle cx="204" cy="38.8" r="1.2" fill="#3a8ad0"/><circle cx="208" cy="35" r="1.2" fill="#3a8ad0"/>
<circle cx="203" cy="55" r="4" fill="#d83a30"/><circle cx="204.5" cy="54" r="3" fill="#fff"/><path d="M202 50.5L205 49.5L208 51L207.5 55L203 55Z" fill="#3a80c8"/><rect x="204.5" y="55.5" width="4.5" height="4" fill="#fff"/><path d="M205.2 57.5L206.3 58.5L208.3 56.5" stroke="#20a040" stroke-width="1" fill="none"/>
<path d="M200 74.5L208 66" stroke="#666" stroke-width="0.8"/><circle cx="200" cy="66" r="1.1" fill="#d84030"/><circle cx="208" cy="66" r="1.1" fill="#d84030"/><circle cx="200" cy="74.5" r="1.1" fill="#d84030"/><circle cx="208" cy="74.5" r="1.1" fill="#d84030"/><path d="M201.5 70L203.5 72.5L207 68" stroke="#20b040" stroke-width="1.8" fill="none"/>
<rect x="233" y="34" width="16" height="19" fill="#c9c6ba" />
<rect x="235" y="36" width="12" height="3.8" fill="#ffffff" />
<rect x="235" y="41.0" width="2.2" height="1.9" fill="#8a8ad8" />
<rect x="238" y="41.0" width="2.2" height="1.9" fill="#8a8ad8" />
<rect x="241" y="41.0" width="2.2" height="1.9" fill="#8a8ad8" />
<rect x="244" y="41.0" width="2.2" height="1.9" fill="#8a8ad8" />
<rect x="235" y="43.8" width="2.2" height="1.9" fill="#a8d8e8" />
<rect x="238" y="43.8" width="2.2" height="1.9" fill="#a8d8e8" />
<rect x="241" y="43.8" width="2.2" height="1.9" fill="#f0b0b8" />
<rect x="244" y="43.8" width="2.2" height="1.9" fill="#9898e0" />
<rect x="235" y="46.6" width="2.2" height="1.9" fill="#a8d8e8" />
<rect x="238" y="46.6" width="2.2" height="1.9" fill="#a8d8e8" />
<rect x="241" y="46.6" width="2.2" height="1.9" fill="#f0b0b8" />
<rect x="244" y="46.6" width="2.2" height="1.9" fill="#9898e0" />
<rect x="235" y="49.4" width="2.2" height="1.9" fill="#a8d8e8" />
<rect x="238" y="49.4" width="2.2" height="1.9" fill="#a8d8e8" />
<rect x="241" y="49.4" width="2.2" height="1.9" fill="#f0b0b8" />
<rect x="244" y="49.4" width="2.2" height="1.9" fill="#9898e0" />
<text x="242" y="63.5" font-size="8" fill="#f2f2f2" text-anchor="middle" letter-spacing="-0.15" font-weight="normal" font-style="normal" font-family="Liberation Sans" >RPN</text>
<text x="242" y="73.0" font-size="8" fill="#f2f2f2" text-anchor="middle" letter-spacing="-0.15" font-weight="normal" font-style="normal" font-family="Liberation Sans" >Calculator...</text>
<path d="M263.75 65.7L267.25 65.7L265.5 67.89999999999999Z" fill="#e0e0e0"/>
<rect x="291.5" y="33" width="19" height="3" fill="#9a50b8" />
<rect x="292" y="36" width="18" height="14" fill="#d8d8d8" />
<rect x="297.5" y="36" width="0.8" height="14" fill="#b0b0b0" />
<rect x="303.5" y="36" width="0.8" height="14" fill="#b0b0b0" />
<rect x="292" y="40" width="18" height="0.8" fill="#b0b0b0" />
<rect x="292" y="44" width="18" height="0.8" fill="#b0b0b0" />
<path d="M294.5 48.5C297.5 43.5 309 43.5 312 48.5C309 53.5 297.5 53.5 294.5 48.5Z" fill="#111"/>
<path d="M297 48.5C299.5 45.3 307 45.3 309.5 48.5C307 51.7 299.5 51.7 297 48.5Z" fill="#fff"/>
<circle cx="303.3" cy="48.5" r="2.6" fill="#111"/><circle cx="302.3" cy="47.6" r="0.8" fill="#fff"/>
<text x="302" y="63.5" font-size="8" fill="#f2f2f2" text-anchor="middle" letter-spacing="-0.15" font-weight="normal" font-style="normal" font-family="Liberation Sans" >View Log File</text>
<path d="M299.75 67.9L303.25 67.9L301.5 70.1Z" fill="#e0e0e0"/>
<path d="M336.3 44.1L341.3 45.1L346.3 41.1L346.3 39.6L341.3 43.6L336.3 42.6Z" fill="#f0a030"/>
<path d="M336.3 42.6L341.3 43.6L346.3 39.6L346.3 38.1L341.3 42.1L336.3 41.1Z" fill="#d83030"/>
<path d="M336.3 41.1L341.3 42.1L346.3 38.1L341.3 37.1Z" fill="#2a90d8"/>
<text x="341.8" y="39.9" font-size="7" fill="#111" text-anchor="middle" letter-spacing="0" font-weight="bold" font-style="normal" font-family="Liberation Sans" >I</text>
<path d="M351.9 44.1L356.9 45.1L361.9 41.1L361.9 39.6L356.9 43.6L351.9 42.6Z" fill="#f0a030"/>
<path d="M351.9 42.6L356.9 43.6L361.9 39.6L361.9 38.1L356.9 42.1L351.9 41.1Z" fill="#d83030"/>
<path d="M351.9 41.1L356.9 42.1L361.9 38.1L356.9 37.1Z" fill="#2a90d8"/>
<text x="357.4" y="39.9" font-size="7" fill="#111" text-anchor="middle" letter-spacing="0" font-weight="bold" font-style="normal" font-family="Liberation Sans" >U</text>
<path d="M367.2 44.1L372.2 45.1L377.2 41.1L377.2 39.6L372.2 43.6L367.2 42.6Z" fill="#f0a030"/>
<path d="M367.2 42.6L372.2 43.6L377.2 39.6L377.2 38.1L372.2 42.1L367.2 41.1Z" fill="#d83030"/>
<path d="M367.2 41.1L372.2 42.1L377.2 38.1L372.2 37.1Z" fill="#2a90d8"/>
<rect x="370.7" y="34.4" width="5" height="4.5" fill="#a8c8e0" />
<path d="M382.8 44.1L387.8 45.1L392.8 41.1L392.8 39.6L387.8 43.6L382.8 42.6Z" fill="#f0a030"/>
<path d="M382.8 42.6L387.8 43.6L392.8 39.6L392.8 38.1L387.8 42.1L382.8 41.1Z" fill="#d83030"/>
<path d="M382.8 41.1L387.8 42.1L392.8 38.1L387.8 37.1Z" fill="#2a90d8"/>
<circle cx="388.3" cy="36.1" r="1.8" fill="none" stroke="#f0e0a0" stroke-width="1.2"/><path d="M388.3 33.6v-1.5M388.3 38.6v1.5M385.8 36.1h-1.5M390.8 36.1h1.5" stroke="#f0e0a0" stroke-width="0.8"/>
<path d="M336.3 59.3L341.3 60.3L346.3 56.3L346.3 54.8L341.3 58.8L336.3 57.8Z" fill="#f0a030"/>
<path d="M336.3 57.8L341.3 58.8L346.3 54.8L346.3 53.3L341.3 57.3L336.3 56.3Z" fill="#d83030"/>
<path d="M336.3 56.3L341.3 57.3L346.3 53.3L341.3 52.3Z" fill="#2a90d8"/>
<text x="341.8" y="55.099999999999994" font-size="7" fill="#111" text-anchor="middle" letter-spacing="0" font-weight="bold" font-style="normal" font-family="Liberation Sans" >I</text>
<path d="M351.9 59.3L356.9 60.3L361.9 56.3L361.9 54.8L356.9 58.8L351.9 57.8Z" fill="#f0a030"/>
<path d="M351.9 57.8L356.9 58.8L361.9 54.8L361.9 53.3L356.9 57.3L351.9 56.3Z" fill="#d83030"/>
<path d="M351.9 56.3L356.9 57.3L361.9 53.3L356.9 52.3Z" fill="#2a90d8"/>
<text x="357.4" y="55.099999999999994" font-size="7" fill="#111" text-anchor="middle" letter-spacing="0" font-weight="bold" font-style="normal" font-family="Liberation Sans" >S</text>
<path d="M367.2 59.3L372.2 60.3L377.2 56.3L377.2 54.8L372.2 58.8L367.2 57.8Z" fill="#f0a030"/>
<path d="M367.2 57.8L372.2 58.8L377.2 54.8L377.2 53.3L372.2 57.3L367.2 56.3Z" fill="#d83030"/>
<path d="M367.2 56.3L372.2 57.3L377.2 53.3L372.2 52.3Z" fill="#2a90d8"/>
<text x="372.7" y="55.099999999999994" font-size="7" fill="#111" text-anchor="middle" letter-spacing="0" font-weight="bold" font-style="normal" font-family="Liberation Sans" >C</text>
<path d="M382.8 59.3L387.8 60.3L392.8 56.3L392.8 54.8L387.8 58.8L382.8 57.8Z" fill="#f0a030"/>
<path d="M382.8 57.8L387.8 58.8L392.8 54.8L392.8 53.3L387.8 57.3L382.8 56.3Z" fill="#d83030"/>
<path d="M382.8 56.3L387.8 57.3L392.8 53.3L387.8 52.3Z" fill="#2a90d8"/>
<text x="388.3" y="55.099999999999994" font-size="7" fill="#111" text-anchor="middle" letter-spacing="0" font-weight="bold" font-style="normal" font-family="Liberation Sans" >M</text>
<path d="M336.3 74.5L341.3 75.5L346.3 71.5L346.3 70.0L341.3 74.0L336.3 73.0Z" fill="#f0a030"/>
<path d="M336.3 73.0L341.3 74.0L346.3 70.0L346.3 68.5L341.3 72.5L336.3 71.5Z" fill="#d83030"/>
<path d="M336.3 71.5L341.3 72.5L346.3 68.5L341.3 67.5Z" fill="#2a90d8"/>
<path d="M336.3 71L342.3 77.5" stroke="#f0c060" stroke-width="1.5"/>
<path d="M351.9 74.5L356.9 75.5L361.9 71.5L361.9 70.0L356.9 74.0L351.9 73.0Z" fill="#f0a030"/>
<path d="M351.9 73.0L356.9 74.0L361.9 70.0L361.9 68.5L356.9 72.5L351.9 71.5Z" fill="#d83030"/>
<path d="M351.9 71.5L356.9 72.5L361.9 68.5L356.9 67.5Z" fill="#2a90d8"/>
<path d="M354.4 65L359.4 70M359.4 65L354.4 70" stroke="#ee2020" stroke-width="1.3"/>
<path d="M367.2 74.5L372.2 75.5L377.2 71.5L377.2 70.0L372.2 74.0L367.2 73.0Z" fill="#f0a030"/>
<path d="M367.2 73.0L372.2 74.0L377.2 70.0L377.2 68.5L372.2 72.5L367.2 71.5Z" fill="#d83030"/>
<path d="M367.2 71.5L372.2 72.5L377.2 68.5L372.2 67.5Z" fill="#2a90d8"/>
<text x="372.7" y="70.3" font-size="7" fill="#111" text-anchor="middle" letter-spacing="0" font-weight="bold" font-style="normal" font-family="Liberation Sans" >G</text>
<path d="M382.8 74.5L387.8 75.5L392.8 71.5L392.8 70.0L387.8 74.0L382.8 73.0Z" fill="#f0a030"/>
<path d="M382.8 73.0L387.8 74.0L392.8 70.0L392.8 68.5L387.8 72.5L382.8 71.5Z" fill="#d83030"/>
<path d="M382.8 71.5L387.8 72.5L392.8 68.5L387.8 67.5Z" fill="#2a90d8"/>
<rect x="385.8" y="64.5" width="5" height="5.5" fill="#a040c0" />
<path d="M407.6 52.5V36.5" stroke="#2a78c0" stroke-width="1.3"/><path d="M405.8 37.5L407.6 35L409.40000000000003 37.5Z" fill="#2a78c0"/><path d="M407.6 52H423.1" stroke="#e02828" stroke-width="1.3"/><path d="M422.6 50.2L425.1 52L422.6 53.8Z" fill="#e02828"/>
<path d="M408 52L420 45" stroke="#30b040" stroke-width="1.2"/><path d="M418 44.2L421 44.5L419.5 47Z" fill="#30b040"/>
<ellipse cx="417.8" cy="40" rx="7.2" ry="2.8" fill="none" stroke="#3a90d8" stroke-width="1.6"/><path d="M413 41.5L416.5 43.5" stroke="#545454" stroke-width="1.2"/>
<text x="416" y="63.5" font-size="8" fill="#f2f2f2" text-anchor="middle" letter-spacing="-0.15" font-weight="normal" font-style="normal" font-family="Liberation Sans" >Surveyor</text>
<text x="416" y="73.0" font-size="8" fill="#f2f2f2" text-anchor="middle" letter-spacing="-0.15" font-weight="normal" font-style="normal" font-family="Liberation Sans" >View</text>
<path d="M446.4 52.5V36.5" stroke="#2a78c0" stroke-width="1.3"/><path d="M444.59999999999997 37.5L446.4 35L448.2 37.5Z" fill="#2a78c0"/><path d="M446.4 52H461.9" stroke="#e02828" stroke-width="1.3"/><path d="M461.4 50.2L463.9 52L461.4 53.8Z" fill="#e02828"/>
<path d="M447 52L452 49" stroke="#30b040" stroke-width="1.2"/>
<circle cx="455.5" cy="42.5" r="6.8" fill="#40a8e8" stroke="#e05020" stroke-width="1"/><path d="M451 39C453 38 454 40 453 42C452 44 454 45 452 46.5M457.5 37.5C459 39 461 39 460 42C459 44 461 45 460 46" stroke="#70b840" stroke-width="2" fill="none"/>
<text x="453.6" y="63.5" font-size="8" fill="#f2f2f2" text-anchor="middle" letter-spacing="-0.15" font-weight="normal" font-style="normal" font-family="Liberation Sans" >World View</text>
<text x="453.6" y="73.0" font-size="8" fill="#f2f2f2" text-anchor="middle" letter-spacing="-0.15" font-weight="normal" font-style="normal" font-family="Liberation Sans" >(North Up)</text>
<path d="M492 52.5V36.5" stroke="#2a78c0" stroke-width="1.3"/><path d="M490.2 37.5L492 35L493.8 37.5Z" fill="#2a78c0"/><path d="M492 52H507.5" stroke="#e02828" stroke-width="1.3"/><path d="M507 50.2L509.5 52L507 53.8Z" fill="#e02828"/>
<path d="M492.5 52L505 45" stroke="#30b040" stroke-width="1.2"/><path d="M503 44.2L506 44.5L504.5 47Z" fill="#30b040"/>
<ellipse cx="502.8" cy="40" rx="7.2" ry="2.8" fill="none" stroke="#e02828" stroke-width="1.6"/><path d="M498 41.5L501.5 43.5" stroke="#545454" stroke-width="1.2"/>
<text x="501" y="63.5" font-size="8" fill="#f2f2f2" text-anchor="middle" letter-spacing="-0.15" font-weight="normal" font-style="normal" font-family="Liberation Sans" >Return to</text>
<text x="501" y="73.0" font-size="8" fill="#f2f2f2" text-anchor="middle" letter-spacing="-0.15" font-weight="normal" font-style="normal" font-family="Liberation Sans" >Surveyor View</text>
<rect x="535.6" y="37.4" width="18.8" height="16.3" fill="#ffffff" /><path d="M535.6 47.506C541.24 43.105 545.0 46.365 547.82 47.18C550.64 45.55 552.52 46.365 554.4 45.876V53.7H535.6Z" fill="#3aa858"/><path d="M535.6 50.44C543.12 47.18 548.76 49.625 554.4 48.81V53.7H535.6Z" fill="#2e9a4c"/>
<circle cx="549" cy="41.5" r="2.8" fill="#f5c000"/><path d="M538 41.5Q541 39.5 544 41.5Z" fill="#88b8e0"/>
<path d="M546 37.5Q550 34 554.5 35" stroke="#e02828" stroke-width="1.2" fill="none"/><path d="M553.5 33.5L556 35.2L553.5 36.8Z" fill="#e02828"/>
<text x="545" y="63.5" font-size="8" fill="#f2f2f2" text-anchor="middle" letter-spacing="-0.15" font-weight="normal" font-style="normal" font-family="Liberation Sans" >Insert</text>
<text x="545" y="73.0" font-size="8" fill="#f2f2f2" text-anchor="middle" letter-spacing="-0.15" font-weight="normal" font-style="normal" font-family="Liberation Sans" >GeoTIFF</text>
<path d="M568 54C568 47 572.5 42.5 577.3 42.5C582 42.5 586.6 47 586.6 54Z" fill="#3a8ad0"/><path d="M570 48C573 47 574 50 576 52L574 54H569ZM580 45C583 46 585 49 584 54H579C578 50 580 48 580 45Z" fill="#30a850"/>
<circle cx="573.5" cy="41" r="4.5" fill="#2a70c0"/><path d="M570 40Q573.5 37.5 577 40M570.5 42.5Q573.5 40.5 577.5 42" stroke="#fff" stroke-width="0.8" fill="none"/>
<text x="577" y="63.5" font-size="8" fill="#f2f2f2" text-anchor="middle" letter-spacing="-0.15" font-weight="normal" font-style="normal" font-family="Liberation Sans" >Attach</text>
<text x="577" y="73.0" font-size="8" fill="#f2f2f2" text-anchor="middle" letter-spacing="-0.15" font-weight="normal" font-style="normal" font-family="Liberation Sans" >Imagery</text>
<rect x="596" y="37.4" width="19" height="16.3" fill="#ffffff" /><path d="M596 47.506C601.7 43.105 605.5 46.365 608.35 47.18C611.2 45.55 613.1 46.365 615 45.876V53.7H596Z" fill="#3aa858"/><path d="M596 50.44C603.6 47.18 609.3 49.625 615 48.81V53.7H596Z" fill="#2e9a4c"/>
<circle cx="611.5" cy="42" r="3" fill="#f5c000"/>
<circle cx="602.2" cy="40.8" r="7.5" fill="#1a2a40"/><circle cx="602.2" cy="40.8" r="5.8" fill="#fff"/><path d="M602.2 35V46.6M596.8 40.8H607.6M599 36.5C597.5 39 597.5 43 599 45.3M605.4 36.5C607 39 607 43 605.4 45.3" stroke="#1a2a40" stroke-width="0.9" fill="none"/>
<text x="604" y="63.5" font-size="8" fill="#f2f2f2" text-anchor="middle" letter-spacing="-0.15" font-weight="normal" font-style="normal" font-family="Liberation Sans" >Valtus</text>
<text x="604" y="73.0" font-size="8" fill="#f2f2f2" text-anchor="middle" letter-spacing="-0.15" font-weight="normal" font-style="normal" font-family="Liberation Sans" >Store</text>
<path d="M622 45L634 33" stroke="#777" stroke-width="1"/><circle cx="624.5" cy="35.5" r="1" fill="#d04030"/><circle cx="631.5" cy="42.5" r="1" fill="#d04030"/>
<rect x="637.5" y="33.5" width="12" height="11" fill="#3a3a52" /><rect x="638.5" y="34.5" width="5" height="4.5" fill="#f0c040" /><rect x="643.5" y="34.5" width="5" height="4.5" fill="#a03080" /><rect x="638.5" y="39" width="5" height="4.5" fill="#f0f0f0" /><rect x="643.5" y="39" width="5" height="4.5" fill="#f0c040" />
<path d="M654 36L657 33.5L659 35V44H654Z" fill="#cde"/><rect x="655" y="39" width="7" height="5.5" fill="#8ec8e8" /><rect x="657.5" y="40.5" width="2" height="4" fill="#d84030" /><path d="M653 44.5H664" stroke="#aaa"/>
<rect x="668.5" y="33.2" width="4.5" height="3" fill="#3a80d0" /><rect x="669" y="36" width="3" height="5" fill="#3a80d0" /><circle cx="676.5" cy="40.8" r="4" fill="#fff" stroke="#e04828" stroke-width="1.8"/>
<circle cx="623.5" cy="50.5" r="0.9" fill="#e05030"/>
<circle cx="627.3" cy="50.5" r="0.9" fill="#e05030"/>
<circle cx="631.1" cy="50.5" r="0.9" fill="#e05030"/>
<circle cx="623.5" cy="54.3" r="0.9" fill="#e05030"/>
<circle cx="627.3" cy="54.3" r="0.9" fill="#e05030"/>
<circle cx="631.1" cy="54.3" r="0.9" fill="#e05030"/>
<circle cx="623.5" cy="58.1" r="0.9" fill="#e05030"/>
<circle cx="627.3" cy="58.1" r="0.9" fill="#e05030"/>
<circle cx="631.1" cy="58.1" r="0.9" fill="#e05030"/>
<rect x="638.5" y="49" width="10" height="11" fill="#f4f4f4" /><rect x="640.5" y="53.5" width="6" height="2" fill="#e03030" /><path d="M639 49H648" stroke="#999" stroke-dasharray="1 1"/>
<rect x="654" y="49" width="10" height="11" fill="#d8d8d8" /><circle cx="657" cy="52.5" r="1.2" fill="#e06050"/><circle cx="660.5" cy="56" r="1.2" fill="#e06050"/><circle cx="657" cy="58" r="1.2" fill="#e06050"/><path d="M664.5 50V60" stroke="#777" stroke-dasharray="1 1"/>
<rect x="622.5" y="65" width="7" height="6" fill="#f0b030" /><rect x="626" y="69" width="7" height="6" fill="#f0a020" /><rect x="622.5" y="71" width="4" height="4" fill="#ddd" />
<path d="M640 75A5 5 0 0 1 650 75Z" fill="#3a90d8"/><path d="M638 66L641 64L642 68Z" fill="#f0b030"/><path d="M638.5 76H651" stroke="#ccc"/>
<rect x="654" y="64.5" width="10.5" height="12" fill="#1a2a40" /><rect x="655" y="65.5" width="8.5" height="10" fill="#fff" /><path d="M654 67L657 64M656 74V70H659V74" stroke="#f0a020" stroke-width="1" fill="none"/>
<path d="M701 45L708 41.5L715 45L708 48.5Z" fill="#38b048"/><path d="M703.5 45L708 42.8L712.5 45L708 47.2Z" fill="#2a8a38"/>
<path d="M701 45V50.5L708 54L715 50.5V45L708 48.5Z" fill="#d89a58"/>
<circle cx="716.3" cy="39.3" r="6" fill="#2a88d8"/>
<text x="716.3" y="42.6" font-size="9" fill="#fff" text-anchor="middle" letter-spacing="0" font-weight="bold" font-style="normal" font-family="Liberation Sans" >?</text>
<text x="712" y="63.5" font-size="8" fill="#f2f2f2" text-anchor="middle" letter-spacing="-0.15" font-weight="normal" font-style="normal" font-family="Liberation Sans" >Lot Closure</text>
<text x="712" y="73.0" font-size="8" fill="#f2f2f2" text-anchor="middle" letter-spacing="-0.15" font-weight="normal" font-style="normal" font-family="Liberation Sans" >Program</text>
<path d="M733.75 65.9L737.25 65.9L735.5 68.1Z" fill="#e0e0e0"/>
<rect x="741" y="32" width="0.9" height="45" fill="#626262" />
<path d="M769 40L777 35L785 40Z" fill="#d8d8d8"/><rect x="770" y="41" width="14" height="10" fill="#cfcfcf" /><rect x="772" y="42" width="2" height="8" fill="#a8a8a8" /><rect x="780" y="42" width="2" height="8" fill="#a8a8a8" /><rect x="775.5" y="45" width="3" height="6" fill="#f0a020" /><rect x="768.7" y="51" width="16.5" height="2.8" fill="#dedede" />
<text x="776.7" y="63.5" font-size="8" fill="#f2f2f2" text-anchor="middle" letter-spacing="-0.15" font-weight="normal" font-style="normal" font-family="Liberation Sans" >Legal Description</text>
<text x="776.7" y="73.0" font-size="8" fill="#f2f2f2" text-anchor="middle" letter-spacing="-0.15" font-weight="normal" font-style="normal" font-family="Liberation Sans" >Writer</text>
<rect x="811.3" y="32" width="0.9" height="45" fill="#626262" />
<path d="M842.5 38L849.3 34L856 38L849.3 42Z" fill="#38b048"/><path d="M845 38L849.3 35.7L853.5 38L849.3 40.3Z" fill="#fff" opacity="0.8"/><path d="M846 38L849.3 36.3L852.5 38L849.3 39.7Z" fill="#38b048"/>
<path d="M842.5 38V42L849.3 45.5L856 42V38L849.3 42Z" fill="#d89a58"/>
<rect x="836" y="44" width="14" height="8.5" fill="#b8b8b8" /><path d="M838.5 45.5V51M841 45.5V51M838.5 48.3H841M842.5 45.5V51M845 45.5V51M842.5 48.3H845M846 45.5V51" stroke="#fff" stroke-width="1"/>
<text x="845" y="63.5" font-size="8" fill="#f2f2f2" text-anchor="middle" letter-spacing="-0.15" font-weight="normal" font-style="normal" font-family="Liberation Sans" >Create/Edit</text>
<text x="845" y="73.0" font-size="8" fill="#f2f2f2" text-anchor="middle" letter-spacing="-0.15" font-weight="normal" font-style="normal" font-family="Liberation Sans" >Lots &amp; Blocks</text>
<path d="M870.55 65.10000000000001L874.05 65.10000000000001L872.3 67.3Z" fill="#e0e0e0"/>
<rect x="892.5" y="36.5" width="13" height="9.5" fill="#ffffff" stroke="#2a88d8" stroke-width="1.5"/>
<path d="M906 47L910 50.5" stroke="#333" stroke-width="1.5"/>
<path d="M938.5 41L943 35L948 39V42Z" fill="#404040"/>
<path d="M936 43L941.5 38L950 41V52.5H936Z" fill="#a8d8f0"/><rect x="941" y="43" width="9" height="9.5" fill="#e0f0fa" /><rect x="944.5" y="46.5" width="2.5" height="6" fill="#d83020" />
<text x="900.8" y="63.5" font-size="8" fill="#f2f2f2" text-anchor="middle" letter-spacing="-0.15" font-weight="normal" font-style="normal" font-family="Liberation Sans" >Rectangular</text>
<text x="900.8" y="73.0" font-size="8" fill="#f2f2f2" text-anchor="middle" letter-spacing="-0.15" font-weight="normal" font-style="normal" font-family="Liberation Sans" >Building</text>
<text x="943" y="63.5" font-size="8" fill="#f2f2f2" text-anchor="middle" letter-spacing="-0.15" font-weight="normal" font-style="normal" font-family="Liberation Sans" >Multisided</text>
<text x="943" y="73.0" font-size="8" fill="#f2f2f2" text-anchor="middle" letter-spacing="-0.15" font-weight="normal" font-style="normal" font-family="Liberation Sans" >Building</text>
<path d="M54.25 84.6L58.75 84.6L56.5 87.4Z" fill="#e8e8e8"/>
<path d="M314.75 84.6L319.25 84.6L317 87.4Z" fill="#e8e8e8"/>
<path d="M387.75 84.6L392.25 84.6L390 87.4Z" fill="#e8e8e8"/>
<path d="M936.25 84.6L940.75 84.6L938.5 87.4Z" fill="#e8e8e8"/>
<defs><radialGradient id="appg" cx="0.45" cy="0.4" r="0.6"><stop offset="0" stop-color="#5ad0f8"/><stop offset="0.7" stop-color="#1a78c0"/><stop offset="1" stop-color="#0a3a70"/></radialGradient><linearGradient id="cmdg" x1="0" y1="0" x2="0" y2="1"><stop offset="0" stop-color="#5a5a5a"/><stop offset="1" stop-color="#343434"/></linearGradient><linearGradient id="navg" x1="0" y1="0" x2="1" y2="0"><stop offset="0" stop-color="#4e545c"/><stop offset="1" stop-color="#5a6068"/></linearGradient></defs>
<defs><linearGradient id="apbg" x1="0" y1="0" x2="0" y2="1"><stop offset="0" stop-color="#767676"/><stop offset="1" stop-color="#575757"/></linearGradient></defs>
<rect x="1" y="15" width="25.5" height="12.5" fill="url(#apbg)"/>
<rect x="0" y="0" width="1" height="28" fill="#5a5a5a"/>
<path d="M2.8 4.8Q13 7 23.8 4.8V20.4Q13 18.5 2.8 20.4Z" fill="#d8cba8" stroke="#9a8a60" stroke-width="0.5"/>
<circle cx="13" cy="12.3" r="9.3" fill="url(#appg)" stroke="#c8b078" stroke-width="1.1"/>
<path d="M13 5.5L15.6 9.6H10.4Z" fill="#f5c030"/><path d="M10.3 10.8H15.7L13 18.2Z" fill="#f0b010"/><path d="M10.5 10.2H15.5" stroke="#d89a10" stroke-width="0.6"/>
<rect x="32.5" y="2.5" width="5" height="7" fill="#ffffff" stroke="#3a7ac0" stroke-width="0.8"/>
<path d="M35 12C35 8 37.5 6.5 39.5 6.5C41.5 6.5 43 8.5 43 12Z" fill="#e88a5e"/><ellipse cx="37" cy="12" rx="4.5" ry="1.3" fill="#e88a5e"/>
<rect x="48" y="4" width="9.5" height="7.5" fill="#f0f0f0" stroke="#777" stroke-width="0.8"/>
<path d="M63.5 11L65 5H69L70 6H73V11Z" fill="#e8e8e8" stroke="#555" stroke-width="0.8"/><path d="M64 11L66 7.5H74L72.5 11Z" fill="#cfcfcf" stroke="#555" stroke-width="0.6"/>
<rect x="79.5" y="3" width="8.5" height="9.5" fill="#6a6a6a" stroke="#3a3a3a" stroke-width="0.8"/><rect x="81" y="3.5" width="5.5" height="3.5" fill="#f0f0f0" /><rect x="81.5" y="9" width="4.5" height="3" fill="#d8d8d8" />
<rect x="94.5" y="3.5" width="8.5" height="9" fill="#f4f4f4" stroke="#333" stroke-width="0.9"/><rect x="95.5" y="4.5" width="6.5" height="2" fill="#333" /><path d="M100 10L104.5 4" stroke="#e8a020" stroke-width="1.5"/>
<path d="M110 8H120V12.5H110Z" fill="#e8e8e8" stroke="#666" stroke-width="0.8"/><rect x="112" y="3.5" width="6" height="4.5" fill="#fff" stroke="#666" stroke-width="0.6"/><rect x="112" y="11" width="6" height="2.5" fill="#9ec8e8"/>
<path d="M127 6.5H132C134 6.5 135 8 135 9.5C135 11 134 12 132 12H130" fill="none" stroke="#6a6a6a" stroke-width="1.6"/><path d="M125 6.5L128.5 3.5V9.5Z" fill="#6a6a6a"/>
<path d="M139.8 6.0L142.8 6.0L141.3 8.0Z" fill="#e8e8e8"/>
<path d="M156 6.5H151C149 6.5 148 8 148 9.5C148 11 149 12 151 12H153" fill="none" stroke="#c0c0c0" stroke-width="1.6"/><path d="M158 6.5L154.5 3.5V9.5Z" fill="#c0c0c0"/>
<path d="M162.8 6.0L165.8 6.0L164.3 8.0Z" fill="#e8e8e8"/>
<rect x="171.5" y="4.5" width="5" height="1" fill="#f0f0f0" /><path d="M171.5 6.5L176.5 6.5L174 9.5Z" fill="#f0f0f0"/>
<path d="M9 109.5C12 109.5 13 107 14 101C15 96.5 16 95.5 19 95.5H86C89 95.5 90 96.5 91 101C92 107 93 109.5 96 109.5Z" fill="#4a4a4a"/>
<text x="20.5" y="106" font-size="7.8" fill="#a8a8a8" text-anchor="start" letter-spacing="-0.1" font-weight="normal" font-style="normal" font-family="Liberation Sans" >Start</text>
<path d="M89 109.5C92 109.5 93 107 94 101C95 96.5 96 95.5 99 95.5H166C169 95.5 170 96.5 171 101C172 107 173 109.5 176 109.5Z" fill="#5c5c5c"/>
<text x="100" y="106" font-size="7.8" fill="#f0f0f0" text-anchor="start" letter-spacing="-0.12" font-weight="normal" font-style="normal" font-family="Liberation Sans" >new block.dxf*</text>
<path d="M159.7 100.5L164.3 105M164.3 100.5L159.7 105" stroke="#8a8a8a" stroke-width="1.2"/>
<path d="M176 108C178 108 178.5 104 179 100.5C179.5 98 180.5 97.5 182 97.5H190.5C191.5 97.5 192 98 191.8 99C191 103 190 108 186 108Z" fill="#4a4a4a"/>
<path d="M184.5 100V106M181.5 103H187.5" stroke="#d8d8d8" stroke-width="1.3"/>
<text x="1.5" y="124" font-size="8.2" fill="#d0d4d8" text-anchor="start" letter-spacing="-0.1" font-weight="normal" font-style="normal" font-family="Liberation Sans" >[−][Top][2D Wireframe]</text>
<rect x="998" y="118" width="72" height="130" fill="#f0f0f0" />
<rect x="998" y="118" width="72" height="19.5" fill="#ffffff" />
<text x="1004" y="130.3" font-size="7.8" fill="#a89cb8" text-anchor="start" letter-spacing="-0.1" font-weight="normal" font-style="normal" font-family="Liberation Sans" >Hot Toggles!</text>
<rect x="1057" y="123" width="13" height="12" fill="#e2e2e2" />
<path d="M1062 127.5L1065 130.5M1065 127.5L1062 130.5" stroke="#f4f4f4" stroke-width="0.8"/>
<path d="M1069.5 118.5L1073.5 123.5M1073.5 118.5L1069.5 123.5" stroke="#d8d8d8" stroke-width="1.1"/>
<rect x="1056" y="118" width="6" height="2" fill="#f4f4f4" />
<rect x="1000.5" y="139.7" width="7.8" height="7.8" fill="#ffffff" stroke="#555" stroke-width="0.9"/>
<path d="M1002 143.5L1003.8 145.5L1007 141.0" stroke="#333" stroke-width="0.9" fill="none"/>
<text x="1010.8" y="146.5" font-size="7" fill="#111" text-anchor="start" letter-spacing="-0.05" font-weight="normal" font-style="normal" font-family="Liberation Sans" >Point Protection</text>
<rect x="1000.5" y="149.29999999999998" width="7.8" height="7.8" fill="#ffffff" stroke="#555" stroke-width="0.9"/>
<path d="M1002 153.1L1003.8 155.1L1007 150.6" stroke="#333" stroke-width="0.9" fill="none"/>
<text x="1010.8" y="156.1" font-size="7" fill="#111" text-anchor="start" letter-spacing="-0.05" font-weight="normal" font-style="normal" font-family="Liberation Sans" >Log File Output</text>
<rect x="1000.5" y="158.89999999999998" width="7.8" height="7.8" fill="#ffffff" stroke="#555" stroke-width="0.9"/>
<text x="1010.8" y="165.7" font-size="7" fill="#111" text-anchor="start" letter-spacing="-0.05" font-weight="normal" font-style="normal" font-family="Liberation Sans" >Input scale</text>
<rect x="1000.5" y="168.2" width="7.8" height="7.8" fill="#ffffff" stroke="#555" stroke-width="0.9"/>
<text x="1010.8" y="175" font-size="7" fill="#111" text-anchor="start" letter-spacing="-0.05" font-weight="normal" font-style="normal" font-family="Liberation Sans" >Output scale</text>
<rect x="1000.5" y="177.6" width="7.8" height="7.8" fill="#ffffff" stroke="#555" stroke-width="0.9"/>
<path d="M1002 181.4L1003.8 183.4L1007 178.9" stroke="#333" stroke-width="0.9" fill="none"/>
<text x="1010.8" y="184.4" font-size="7" fill="#111" text-anchor="start" letter-spacing="-0.05" font-weight="normal" font-style="normal" font-family="Liberation Sans" >Draw lines/curves</text>
<rect x="1000.5" y="186.79999999999998" width="7.8" height="7.8" fill="#ffffff" stroke="#555" stroke-width="0.9"/>
<path d="M1002 190.6L1003.8 192.6L1007 188.1" stroke="#333" stroke-width="0.9" fill="none"/>
<text x="1010.8" y="193.6" font-size="7" fill="#111" text-anchor="start" letter-spacing="-0.05" font-weight="normal" font-style="normal" font-family="Liberation Sans" >Draw distances</text>
<rect x="1000.5" y="196.0" width="7.8" height="7.8" fill="#ffffff" stroke="#555" stroke-width="0.9"/>
<path d="M1002 199.8L1003.8 201.8L1007 197.3" stroke="#333" stroke-width="0.9" fill="none"/>
<text x="1010.8" y="202.8" font-size="7" fill="#111" text-anchor="start" letter-spacing="-0.05" font-weight="normal" font-style="normal" font-family="Liberation Sans" >Draw bearings</text>
<text x="1025.4" y="216" font-size="7" fill="#111" text-anchor="end" letter-spacing="-0.05" font-weight="normal" font-style="normal" font-family="Liberation Sans" >Next pt:</text>
<rect x="1028.5" y="207" width="39.5" height="12" fill="#ffffff" stroke="#8a8a8a" stroke-width="0.8"/>
<text x="1031" y="216.5" font-size="7.5" fill="#111" text-anchor="start" letter-spacing="0" font-weight="normal" font-style="normal" font-family="Liberation Sans" >1</text>
<text x="1025.4" y="229.8" font-size="7" fill="#111" text-anchor="end" letter-spacing="-0.05" font-weight="normal" font-style="normal" font-family="Liberation Sans" >Low pt:</text>
<rect x="1028.5" y="220.7" width="39.5" height="11.8" fill="#f0f0f0" stroke="#9a9a9a" stroke-width="0.8"/>
<text x="1031" y="230" font-size="7.5" fill="#111" text-anchor="start" letter-spacing="0" font-weight="normal" font-style="normal" font-family="Liberation Sans" >1</text>
<rect x="1008.5" y="235.5" width="50" height="9" fill="#e1e1e1" stroke="#adadad" stroke-width="0.8"/>
<text x="1033.5" y="243" font-size="7.5" fill="#111" text-anchor="middle" letter-spacing="-0.05" font-weight="normal" font-style="normal" font-family="Liberation Sans" >Refresh</text>
<rect x="1058" y="359.5" width="20.5" height="136.5" rx="3" fill="#50565e"/>
<circle cx="1074.7" cy="362.8" r="1.5" fill="none" stroke="#363b42" stroke-width="0.6"/><circle cx="1074.7" cy="491.5" r="1.5" fill="none" stroke="#363b42" stroke-width="0.6"/>
<circle cx="1068.2" cy="377.7" r="5.5" fill="none" stroke="#363b42" stroke-width="1"/><circle cx="1068.2" cy="377" r="3" fill="none" stroke="#363b42" stroke-width="0.9"/>
<path d="M1066.95 390.85L1069.45 390.85L1068.2 392.35Z" fill="#363b42"/>
<path d="M1066.95 435.95L1069.45 435.95L1068.2 437.45Z" fill="#363b42"/>
<path d="M1066.95 460.25L1069.45 460.25L1068.2 461.75Z" fill="#363b42"/>
<path d="M1063 404C1063 401 1065 401 1065 403V399C1065 397.5 1067 397.5 1067 399V398C1067 396.5 1069 396.5 1069 398V399C1069 397.5 1071 397.5 1071 399V402C1072 400.5 1074 401 1073 403L1070.5 410H1065.5Z" fill="none" stroke="#363b42" stroke-width="0.8"/>
<path d="M1063 419L1072 428M1063 428L1067 424M1069 421L1072 419" stroke="#363b42" stroke-width="0.9"/><circle cx="1072" cy="427" r="2.5" fill="none" stroke="#363b42" stroke-width="0.9"/>
<ellipse cx="1068.2" cy="448" rx="5.5" ry="2.5" fill="none" stroke="#363b42" stroke-width="0.9"/><path d="M1068.2 441V455M1065 449V445H1071" stroke="#363b42" stroke-width="1" fill="none"/>
<path d="M1062 468H1066V471H1062ZM1066.5 468H1070.5V471H1066.5ZM1071 468H1075V471H1071ZM1062 472H1075V479H1062Z" fill="none" stroke="#363b42" stroke-width="0.7"/><path d="M1066.5 473L1070 475.5L1066.5 478Z" fill="#363b42"/>
<rect x="1013" y="512" width="30" height="10.5" rx="2.5" fill="#707582"/>
<text x="1015.5" y="520.5" font-size="7" fill="#3c414a" text-anchor="start" letter-spacing="-0.1" font-weight="normal" font-style="normal" font-family="Liberation Sans" >WCS</text>
<path d="M1034.75 516.5L1038.25 516.5L1036.5 518.5Z" fill="#4a4f58"/>
<circle cx="1028" cy="579.4" r="34.5" fill="none" stroke="#4c525b" stroke-width="8.5"/>
<g transform="translate(1028 579.4) rotate(20)"><rect x="-16.4" y="-16.4" width="32.8" height="32.8" fill="#c2c5c8"/><rect x="-11" y="-11" width="22" height="22" fill="#a9b0b8"/><text x="0" y="0" transform="rotate(90)" font-size="7.5" fill="#2a2f36" text-anchor="middle" dy="2.6" font-family="Liberation Sans">TOP</text></g>
<g transform="translate(1028 579.4) rotate(110)"><text x="0" y="-34.8" dy="4.3" font-size="12" font-weight="bold" fill="#c4c8cc" text-anchor="middle" font-family="Liberation Sans">N</text></g>
<g transform="translate(1028 579.4) rotate(200)"><text x="0" y="-34.8" dy="4.3" font-size="12" font-weight="bold" fill="#c4c8cc" text-anchor="middle" font-family="Liberation Sans">E</text></g>
<g transform="translate(1028 579.4) rotate(290)"><text x="0" y="-34.8" dy="4.3" font-size="12" font-weight="bold" fill="#c4c8cc" text-anchor="middle" font-family="Liberation Sans">S</text></g>
<g transform="translate(1028 579.4) rotate(20)"><text x="0" y="-34.8" dy="4.3" font-size="12" font-weight="bold" fill="#c4c8cc" text-anchor="middle" font-family="Liberation Sans">W</text></g>
<g stroke="#d8d8d8" stroke-width="0.9" fill="none"><path d="M22 593.5L51.8 601.5M22 593.5L10.5 621"/><path d="M18.5 586.5L26 589L24 596.5L16.8 594Z"/><path d="M53 590L57 594.5L61 590M57 594.5V599"/><path d="M14 612L22 620M22 612L14 620"/></g>
<rect x="216.5" y="614.5" width="34.5" height="16.5" fill="url(#cmdg)" />
<rect x="251" y="614.5" width="613" height="16.5" fill="#c5c6c8" />
<rect x="218.8" y="616" width="0.9" height="0.9" fill="#8a8a8a" /><rect x="220.6" y="616" width="0.9" height="0.9" fill="#8a8a8a" />
<rect x="218.8" y="618" width="0.9" height="0.9" fill="#8a8a8a" /><rect x="220.6" y="618" width="0.9" height="0.9" fill="#8a8a8a" />
<rect x="218.8" y="620" width="0.9" height="0.9" fill="#8a8a8a" /><rect x="220.6" y="620" width="0.9" height="0.9" fill="#8a8a8a" />
<rect x="218.8" y="622" width="0.9" height="0.9" fill="#8a8a8a" /><rect x="220.6" y="622" width="0.9" height="0.9" fill="#8a8a8a" />
<rect x="218.8" y="624" width="0.9" height="0.9" fill="#8a8a8a" /><rect x="220.6" y="624" width="0.9" height="0.9" fill="#8a8a8a" />
<rect x="218.8" y="626" width="0.9" height="0.9" fill="#8a8a8a" /><rect x="220.6" y="626" width="0.9" height="0.9" fill="#8a8a8a" />
<rect x="218.8" y="628" width="0.9" height="0.9" fill="#8a8a8a" /><rect x="220.6" y="628" width="0.9" height="0.9" fill="#8a8a8a" />
<path d="M226.5 620L232 626M232 620L226.5 626" stroke="#e8e8e8" stroke-width="1.3"/>
<path d="M242.5 622L247.5 627.5" stroke="#e0e0e0" stroke-width="1.8" stroke-linecap="round"/><path d="M239.3 619.3A2.6 2.6 0 1 0 243.8 621.5L241.8 621.2L241.3 619.5L242.3 617.8A2.6 2.6 0 0 0 239.3 619.3Z" fill="#e0e0e0"/>
<rect x="254.5" y="618.8" width="9" height="7.6" fill="#a3abb4" stroke="#6a7078" stroke-width="0.7"/>
<path d="M256 620.5L258 622.3L256 624M258.5 624.5H261.5" stroke="#1e2228" stroke-width="0.8" fill="none"/>
<path d="M266.5 621.3L269.5 621.3L268 623.3Z" fill="#555"/>
<text x="274.7" y="625" font-size="7.5" fill="#8a8c90" text-anchor="start" letter-spacing="0" font-weight="normal" font-style="italic" font-family="Liberation Mono" >Type a command</text>
<path d="M856.5 624H862L859.2 621Z" fill="#222"/>
<rect x="0" y="631" width="1080" height="18" fill="#393939" />
<rect x="0" y="631" width="1080" height="0.8" fill="#505050" />
<path d="M5 643C8 643 8.5 641 9 637C9.5 633.5 10.5 632 13 632H41C43.5 632 44.5 633 44 636C43.5 640 43 643 40 643Z" fill="#707070"/>
<text x="26.5" y="640" font-size="7.8" fill="#ffffff" text-anchor="middle" letter-spacing="-0.1" font-weight="bold" font-style="normal" font-family="Liberation Sans" >Model</text>
<path d="M44 643C47 643 48 641 48.5 637C49 633.5 50 632 52.5 632H85C87.5 632 88.5 633 88 636C87.5 640 87 643 84 643Z" fill="#505050"/>
<text x="65.5" y="640" font-size="7.8" fill="#c0c0c0" text-anchor="middle" letter-spacing="-0.1" font-weight="normal" font-style="normal" font-family="Liberation Sans" >Layout1</text>
<path d="M88.5 642C91 642 91.5 640 92 637C92.5 634 93.5 633 95.5 633H103C104 633 104.5 634 104 635.5C103 639 102 642 99 642Z" fill="#505050"/>
<path d="M96.2 634.5V640.5M93.2 637.5H99.2" stroke="#e0e0e0" stroke-width="1.2"/>
<rect x="718.5" y="632.5" width="30" height="16.5" fill="#474747" stroke="#5c5c5c" stroke-width="1"/>
<rect x="751.0" y="632.5" width="39.5" height="16.5" fill="#474747" stroke="#5c5c5c" stroke-width="1"/>
<rect x="793.2" y="632.5" width="64.29999999999995" height="16.5" fill="#474747" stroke="#5c5c5c" stroke-width="1"/>
<rect x="859.5" y="632.5" width="39" height="16.5" fill="#474747" stroke="#5c5c5c" stroke-width="1"/>
<rect x="902.5" y="632.5" width="66" height="16.5" fill="#474747" stroke="#5c5c5c" stroke-width="1"/>
<rect x="971.1" y="632.5" width="24.0" height="16.5" fill="#474747" stroke="#5c5c5c" stroke-width="1"/>
<rect x="997.5" y="632.5" width="16" height="16.5" fill="#474747" stroke="#5c5c5c" stroke-width="1"/>
<rect x="1015.5" y="632.5" width="14.5" height="16.5" fill="#474747" stroke="#5c5c5c" stroke-width="1"/>
<rect x="1032.1" y="632.5" width="14.900000000000091" height="16.5" fill="#474747" stroke="#5c5c5c" stroke-width="1"/>
<rect x="1049.5" y="632.5" width="14.5" height="16.5" fill="#474747" stroke="#5c5c5c" stroke-width="1"/>
<rect x="1066.5" y="632.5" width="13" height="16.5" fill="#474747" stroke="#5c5c5c" stroke-width="1"/>
<text x="733.5" y="643.2" font-size="8.3" fill="#ececec" text-anchor="middle" letter-spacing="-0.3" font-weight="normal" font-style="normal" font-family="Liberation Sans" >MODEL</text>
<rect x="754.5" y="635.5" width="0.8" height="10" fill="#9a9a9a" />
<rect x="755.9" y="635.5" width="0.8" height="10" fill="#9a9a9a" />
<rect x="757.3" y="635.5" width="0.8" height="10" fill="#9a9a9a" />
<rect x="758.7" y="635.5" width="0.8" height="10" fill="#9a9a9a" />
<rect x="760.1" y="635.5" width="0.8" height="10" fill="#9a9a9a" />
<rect x="769.0" y="636.0" width="0.8" height="0.8" fill="#9a9a9a" />
<rect x="769.0" y="637.8" width="0.8" height="0.8" fill="#9a9a9a" />
<rect x="769.0" y="639.6" width="0.8" height="0.8" fill="#9a9a9a" />
<rect x="769.0" y="641.4" width="0.8" height="0.8" fill="#9a9a9a" />
<rect x="769.0" y="643.2" width="0.8" height="0.8" fill="#9a9a9a" />
<rect x="770.7" y="636.0" width="0.8" height="0.8" fill="#9a9a9a" />
<rect x="770.7" y="637.8" width="0.8" height="0.8" fill="#9a9a9a" />
<rect x="770.7" y="639.6" width="0.8" height="0.8" fill="#9a9a9a" />
<rect x="770.7" y="641.4" width="0.8" height="0.8" fill="#9a9a9a" />
<rect x="770.7" y="643.2" width="0.8" height="0.8" fill="#9a9a9a" />
<rect x="772.4" y="636.0" width="0.8" height="0.8" fill="#9a9a9a" />
<rect x="772.4" y="637.8" width="0.8" height="0.8" fill="#9a9a9a" />
<rect x="772.4" y="639.6" width="0.8" height="0.8" fill="#9a9a9a" />
<rect x="772.4" y="641.4" width="0.8" height="0.8" fill="#9a9a9a" />
<rect x="772.4" y="643.2" width="0.8" height="0.8" fill="#9a9a9a" />
<rect x="774.1" y="636.0" width="0.8" height="0.8" fill="#9a9a9a" />
<rect x="774.1" y="637.8" width="0.8" height="0.8" fill="#9a9a9a" />
<rect x="774.1" y="639.6" width="0.8" height="0.8" fill="#9a9a9a" />
<rect x="774.1" y="641.4" width="0.8" height="0.8" fill="#9a9a9a" />
<rect x="774.1" y="643.2" width="0.8" height="0.8" fill="#9a9a9a" />
<rect x="775.8" y="636.0" width="0.8" height="0.8" fill="#9a9a9a" />
<rect x="775.8" y="637.8" width="0.8" height="0.8" fill="#9a9a9a" />
<rect x="775.8" y="639.6" width="0.8" height="0.8" fill="#9a9a9a" />
<rect x="775.8" y="641.4" width="0.8" height="0.8" fill="#9a9a9a" />
<rect x="775.8" y="643.2" width="0.8" height="0.8" fill="#9a9a9a" />
<path d="M783.5 639.25L787.5 639.25L785.5 641.75Z" fill="#e8e8e8"/>
<path d="M797.5 635V645H805M797.5 641H800V645" stroke="#c8c8c8" stroke-width="0.9" fill="none"/>
<circle cx="816.5" cy="640.5" r="4.5" fill="none" stroke="#2a8ae8" stroke-width="1.5"/><path d="M816.5 640.5L821 640.5M816.5 640.5L819 637.5" stroke="#2a8ae8" stroke-width="1.2"/>
<path d="M825.5 639.25L829.5 639.25L827.5 641.75Z" fill="#e8e8e8"/>
<path d="M837 636L846 646M840 634V647" stroke="#c0c0c0" stroke-width="0.9"/>
<path d="M851.5 639.25L855.5 639.25L853.5 641.75Z" fill="#e8e8e8"/>
<path d="M862 645.5H872M862 645.5L870 637" stroke="#2a8ae8" stroke-width="1.3"/>
<rect x="877" y="636" width="8" height="9" fill="none" stroke="#2a8ae8" stroke-width="1.3"/><rect x="875.5" y="634.5" width="3" height="2.5" fill="#30c030" />
<path d="M892.5 639.25L896.5 639.25L894.5 641.75Z" fill="#e8e8e8"/>
<path d="M905 646L909.5 640L913 646M909.5 640V636M909.5 636A2 2 0 1 0 912.5 634" stroke="#2a8ae8" stroke-width="1.6" fill="none"/>
<path d="M919 646L923.5 640L927 646M923.5 640V636L926 634" stroke="#c0c0c0" stroke-width="1.3" fill="none"/>
<path d="M933 646L937.5 640L941 646M937.5 640V634" stroke="#c0c0c0" stroke-width="1.3" fill="none"/>
<text x="951.5" y="644" font-size="7.5" fill="#d8d8d8" text-anchor="middle" letter-spacing="-0.2" font-weight="normal" font-style="normal" font-family="Liberation Sans" >1:1</text>
<path d="M962.5 639.25L966.5 639.25L964.5 641.75Z" fill="#e8e8e8"/>
<circle cx="979" cy="640.5" r="3.3" fill="none" stroke="#b0b0b0" stroke-width="2" stroke-dasharray="1.3 0.8"/>
<path d="M988.0 639.25L992.0 639.25L990 641.75Z" fill="#e8e8e8"/>
<path d="M1005.5 635V646M1000 640.5H1011" stroke="#e0e0e0" stroke-width="1.1"/>
<path d="M1018 634H1022V638H1018ZM1020 641L1023 646H1017Z" fill="none" stroke="#c0c0c0" stroke-width="0.8"/><circle cx="1025.5" cy="639" r="2.5" fill="none" stroke="#c0c0c0" stroke-width="0.8"/>
<circle cx="1039.5" cy="640.5" r="6" fill="#1a66d0" stroke="#3a8ae8" stroke-width="1"/><path d="M1037 641L1039 643L1042 638" stroke="#a8c8f0" stroke-width="0.8" fill="none"/>
<rect x="1052" y="635.5" width="10" height="8.5" fill="none" stroke="#c0c0c0" stroke-width="0.8"/><path d="M1054 642L1060 637M1057.5 637H1060V639.5" stroke="#c0c0c0" stroke-width="0.8" fill="none"/>
<path d="M1068 636H1078M1068 640.5H1078M1068 645H1078" stroke="#e0e0e0" stroke-width="1.2"/>
</svg>
</body></html>
